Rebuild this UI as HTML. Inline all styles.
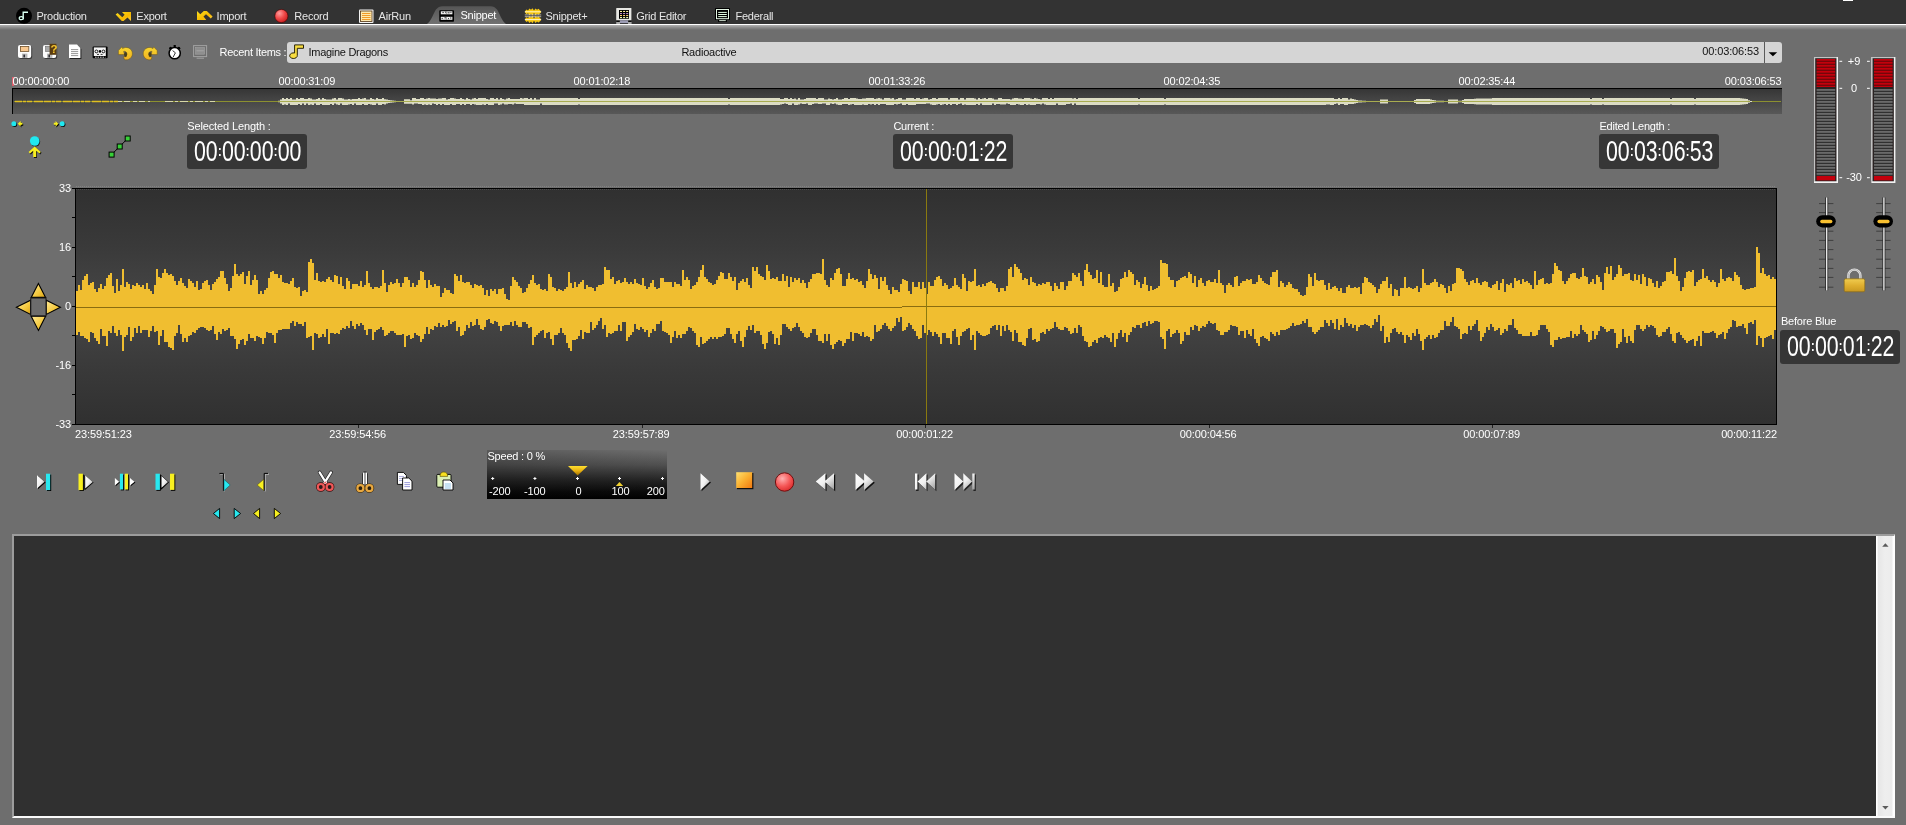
<!DOCTYPE html>
<html lang="en"><head><meta charset="utf-8"><title>Snippet Editor</title>
<style>
html,body{margin:0;padding:0;}
body{width:1906px;height:825px;overflow:hidden;background:#6e6e6e;position:relative;
 font-family:"Liberation Sans",sans-serif;font-size:11px;color:#fff;}
.a{position:absolute;}
.t{position:absolute;white-space:nowrap;line-height:13px;height:13px;}
svg{position:absolute;overflow:visible;}
#topbar{left:0;top:0;width:1906px;height:24px;background:#333;}
#topline{left:0;top:24px;width:1906px;height:1px;background:#fff;}
#topgrad{left:0;top:25px;width:1906px;height:5px;background:linear-gradient(#b2b2b2,#8c8c8c 50%,#6e6e6e);}
.tab{color:#e6e6e6;top:10px;}
.lcd{position:absolute;background:#363636;border-radius:3px;height:35px;width:120px;}
.lcd span{position:absolute;left:7.3px;top:0;white-space:nowrap;font-size:29px;line-height:35.6px;color:#fff;transform-origin:0 0;transform:scaleX(0.735);}
.lcd i{font-style:normal;font-size:15px;position:relative;top:-5px;margin:0 0.35px;font-weight:bold}
.ls{letter-spacing:-0.3px;}
.ls2{letter-spacing:-0.22px;}
.ds{letter-spacing:-0.13px;}
.tab{letter-spacing:-0.24px;}
.ax{left:21px;width:50px;text-align:right;}
.tl{width:100px;text-align:center;}
#txt{position:absolute;left:0;top:0;width:1906px;height:825px;will-change:transform;}
.lcd{will-change:transform;}

</style></head>
<body>
<div class="a" id="topbar"></div>
<div class="a" id="topline"></div>
<div class="a" id="topgrad"></div>
<div class="a" style="left:1843px;top:0;width:10px;height:1px;background:#fff"></div>
<svg width="1906" height="25" style="left:0;top:0" viewBox="0 0 1906 25">
 <defs>
  <linearGradient id="gTab" x1="0" y1="0" x2="0" y2="1"><stop offset="0" stop-color="#555"/><stop offset="1" stop-color="#727272"/></linearGradient>
  <radialGradient id="gRec" cx="0.35" cy="0.3" r="0.8"><stop offset="0" stop-color="#ff9a9a"/><stop offset="0.5" stop-color="#f04848"/><stop offset="1" stop-color="#c01818"/></radialGradient>
  <linearGradient id="gGold" x1="0" y1="0" x2="1" y2="1"><stop offset="0" stop-color="#f8e020"/><stop offset="0.6" stop-color="#f8b800"/><stop offset="1" stop-color="#fcd040"/></linearGradient>
 </defs>
 <!-- active tab -->
 <path d="M427,24 C431,22 433.5,13 436,9.6 Q438.5,6.2 442.5,6.2 L490.5,6.2 Q494.5,6.2 497,9.6 C499.5,13 502,22 506,24 Z" fill="url(#gTab)"/>
 <!-- production -->
 <circle cx="24" cy="15.8" r="8" fill="#000"/>
 <path d="M23.2,19.3 V12.2 H28" fill="none" stroke="#d8fff0" stroke-width="1.4"/>
 <ellipse cx="21.3" cy="18.2" rx="2.1" ry="1.5" fill="none" stroke="#d8fff0" stroke-width="1.2"/>
 <!-- export -->
 <path d="M115.6,14.6 L117.6,13 L122.3,17.3 L124.6,14.8 L122,12 L131,12 L131,21 L127.5,17.6 L123.5,21 L121.8,21 Z" fill="url(#gGold)"/>
 <!-- import -->
 <path d="M197,11 L200.3,14.3 L203.8,11 L206.8,11 L212.6,16.6 L210.8,18.6 L206,14.2 L203.5,16.6 L206.3,20 L197,20 Z" fill="url(#gGold)"/>
 <!-- record -->
 <circle cx="281.4" cy="16" r="6.6" fill="url(#gRec)" stroke="#400" stroke-width="0.6"/>
 <!-- airrun -->
 <rect x="359" y="9.5" width="14.5" height="13.5" rx="1" fill="#f4f4f4"/>
 <rect x="360.5" y="11" width="11.5" height="10.5" fill="#fde9b0" stroke="#503010" stroke-width="0.8"/>
 <path d="M362,13.5h8.5M362,15.5h8.5M362,17.5h8.5M362,19.5h8.5" stroke="#f09018" stroke-width="0.9"/>
 <!-- snippet -->
 <rect x="439.3" y="10.3" width="14.7" height="11.4" rx="0.8" fill="#000"/>
 <rect x="440.8" y="11.3" width="11.6" height="3" fill="#f2f2f2"/>
 <rect x="440.8" y="16.8" width="11.6" height="3" fill="#f2f2f2"/>
 <path d="M442.4,12.6h1.4M445,12.2h1M447.6,12.8h2M450.4,12.4h1M441.6,18.4h1.2M444.4,17.8h1.6M448,18.6h1M450,18h1.4" stroke="#222" stroke-width="0.9"/>
 <path d="M446.3,11.3v3M446.3,16.8v3" stroke="#555" stroke-width="0.6"/>
 <!-- snippet+ -->
 <path d="M525,11.2 L526.5,9.4 L528,10.4 L529.5,8.4 L531,9.8 L532.5,8.2 L534,10.6 L535.5,8.4 L537,9.8 L538.5,8.8 L540,10.2 L541,11.2 L541,12.4 L540,13.4 L538.5,14.8 L537,13.8 L535.5,15.2 L534,13.0 L532.5,15.4 L531,13.8 L529.5,15.2 L528,13.2 L526.5,14.2 L525,12.4Z" fill="#f8c810"/>
 <path d="M525,19.0 L526.5,17.2 L528,18.2 L529.5,16.2 L531,17.6 L532.5,16.0 L534,18.4 L535.5,16.2 L537,17.6 L538.5,16.6 L540,18.0 L541,19.0 L541,20.2 L540,21.2 L538.5,22.6 L537,21.6 L535.5,23.0 L534,20.8 L532.5,23.2 L531,21.6 L529.5,23.0 L528,21.0 L526.5,22.0 L525,20.2Z" fill="#f8c810"/>
 <path d="M524.8,11.8h16.4M524.8,19.6h16.4" stroke="#fffbe0" stroke-width="0.9"/>
 <path d="M524.8,14.9h16.4M524.8,16.7h16.4" stroke="#f0ead0" stroke-width="0.7"/>
 <!-- grid editor -->
 <rect x="616.2" y="8" width="15.2" height="12.3" rx="0.6" fill="#e8e8e4"/>
 <rect x="619" y="10" width="10" height="8.8" fill="#000"/>
 <rect x="620.0" y="10.9" width="2" height="1.1" fill="#fff0a0"/><rect x="623.1" y="10.9" width="2" height="1.1" fill="#fff0a0"/><rect x="626.2" y="10.9" width="2" height="1.1" fill="#fff0a0"/><rect x="620.0" y="13.0" width="2" height="1.1" fill="#b888c8"/><rect x="623.1" y="13.0" width="2" height="1.1" fill="#b888c8"/><rect x="626.2" y="13.0" width="2" height="1.1" fill="#b888c8"/><rect x="620.0" y="15.0" width="2" height="1.1" fill="#ffd070"/><rect x="623.1" y="15.0" width="2" height="1.1" fill="#ffd070"/><rect x="626.2" y="15.0" width="2" height="1.1" fill="#ffd070"/><rect x="620.0" y="17.0" width="2" height="1.1" fill="#f0f8b0"/><rect x="623.1" y="17.0" width="2" height="1.1" fill="#f0f8b0"/><rect x="626.2" y="17.0" width="2" height="1.1" fill="#f0f8b0"/>
 <rect x="620" y="20.3" width="8" height="2.8" fill="#9c9cb4"/>
 <rect x="616.2" y="22.4" width="3.8" height="1.2" fill="#f4f4f4"/><rect x="628" y="22.4" width="3.6" height="1.2" fill="#f4f4f4"/>
 <rect x="616.6" y="20.8" width="2.6" height="1" fill="#000"/><rect x="628.6" y="20.8" width="2.6" height="1" fill="#000"/>
 <!-- federall -->
 <rect x="715" y="8" width="15" height="12" rx="0.6" fill="#000"/>
 <rect x="716.5" y="9.5" width="12" height="9.2" fill="none" stroke="#e4f6e4" stroke-width="1"/>
 <path d="M718.2,12.4h8.6M718.2,14.5h8.6M718.2,16.6h8.6" stroke="#e4ffe4" stroke-width="1"/>
 <rect x="718" y="20" width="9" height="1.9" fill="#000"/>
 <rect x="719.2" y="20.2" width="6.6" height="0.9" fill="#e4f6e4"/>
</svg>
<svg width="220" height="30" style="left:0;top:36px" viewBox="0 36 220 30">
 <defs>
  <linearGradient id="gUndo" x1="0" y1="0" x2="0" y2="1"><stop offset="0" stop-color="#f8d830"/><stop offset="1" stop-color="#f0b020"/></linearGradient>
 </defs>
 <!-- save -->
 <rect x="19" y="46" width="13.2" height="13" rx="2" fill="#3a3a3a"/>
 <rect x="18" y="45" width="13.2" height="13" rx="2" fill="#fdfdfd"/>
 <rect x="20.4" y="46.4" width="8.4" height="5" fill="#f8c890" stroke="#70502a" stroke-width="0.8"/>
 <rect x="22" y="53.6" width="5.4" height="4.4" fill="#b8b8b8"/>
 <rect x="23.4" y="54.6" width="1.6" height="2.8" fill="#303038"/>
 <!-- save as -->
 <rect x="44" y="46" width="13.2" height="13" rx="2" fill="#3a3a3a"/>
 <rect x="43" y="45" width="13.2" height="13" rx="2" fill="#fdfdfd"/>
 <rect x="45.6" y="46.2" width="6" height="5.2" fill="#a8a8a8" stroke="#686868" stroke-width="0.6"/>
 <rect x="47" y="53.6" width="5.4" height="4.4" fill="#b8b8b8"/>
 <rect x="48.4" y="54.6" width="1.6" height="2.8" fill="#303038"/>
 <rect x="49.6" y="43.8" width="6.8" height="11" fill="#5a3c10"/>
 <!-- document -->
 <path d="M70,45.6 H78 L81.4,49 V59 H70 Z" fill="#222"/>
 <path d="M69,44.6 H77 L80.4,48 V58 H69 Z" fill="#fff"/>
 <path d="M71,49.6h7.2M71,51.6h7.2M71,53.6h7.2M71,55.6h7.2" stroke="#8a8a8a" stroke-width="0.9"/>
 <!-- cassette -->
 <rect x="92.6" y="46.4" width="15" height="11.8" rx="1" fill="#000"/>
 <rect x="93.8" y="47.4" width="12" height="8.6" fill="#f4f4f4"/>
 <circle cx="96.4" cy="51.4" r="1.4" fill="#fff" stroke="#000" stroke-width="0.9"/>
 <circle cx="103.4" cy="51.4" r="1.4" fill="#fff" stroke="#000" stroke-width="0.9"/>
 <rect x="98.8" y="50.2" width="2.2" height="2.4" fill="#000"/>
 <path d="M97,54.4h2M100.6,54.4h2" stroke="#000" stroke-width="0.8"/>
 <path d="M95,57.2h10.4" stroke="#fff" stroke-width="0.8" stroke-dasharray="1.6 0.9"/>
 <!-- undo -->
 <path d="M118.4,50.6 L122,46.8 L122.6,48.6 A6.2,6.2 0 1 1 124.4,59.6 L123.6,56.4 A2.6,2.6 0 1 0 123.6,51.4 L124.6,54.6 L118.4,54.6 Z" fill="url(#gUndo)" stroke="#6a5418" stroke-width="0.5"/>
 <ellipse cx="125.6" cy="54.6" rx="1.5" ry="2.6" fill="#3a3008" opacity="0.75"/>
 <!-- redo -->
 <path d="M157.2,50.6 L153.6,46.8 L153,48.6 A6.2,6.2 0 1 0 151.2,59.6 L152,56.4 A2.6,2.6 0 1 1 152,51.4 L151,54.6 L157.2,54.6 Z" fill="url(#gUndo)" stroke="#6a5418" stroke-width="0.5"/>
 <ellipse cx="150" cy="54.6" rx="1.5" ry="2.6" fill="#3a3008" opacity="0.75"/>
 <!-- clock -->
 <circle cx="170.6" cy="48.2" r="1.5" fill="#000"/><circle cx="178.8" cy="48.2" r="1.5" fill="#000"/>
 <rect x="173.6" y="45" width="2.2" height="2.2" fill="#000"/>
 <circle cx="174.7" cy="53.2" r="5.6" fill="#fff" stroke="#000" stroke-width="1.5"/>
 <path d="M172.6,50.6 L175.4,52.8 L173.2,57" fill="none" stroke="#222" stroke-width="0.9"/>
 <!-- monitor disabled -->
 <rect x="193.6" y="45.6" width="13" height="11" fill="none" stroke="#a2a2a2" stroke-width="1"/>
 <rect x="195.6" y="47.6" width="9" height="6.6" fill="#8e8e8e" stroke="#a2a2a2" stroke-width="0.6"/>
 <path d="M196.4,50.8h7.4" stroke="#a8a8a8" stroke-width="0.9"/>
 <path d="M196.6,58.2h7.4" stroke="#a2a2a2" stroke-width="1"/>
</svg>
<div class="a" style="left:287px;top:42px;width:1495px;height:21px;background:#d5d5d5;border-radius:3px;"></div>
<div class="a" style="left:1764px;top:42px;width:1px;height:21px;background:#5a5a5a;"></div>
<svg width="1500" height="25" style="left:287px;top:40px" viewBox="287 40 1500 25">
 <path d="M1768.6,52.3 H1777.2 L1772.9,56.2 Z" fill="#000"/>
 <!-- note -->
 <path d="M294.6,44.9 H303.5 V48.3 H297.3 V55.6 A3.8,2.8 0 1 1 294.6,53 Z" fill="#f8dc40" stroke="#2a2408" stroke-width="1" stroke-linejoin="round"/>
</svg>
<div class="a" style="left:12px;top:77px;width:2px;height:9px;background:#ff5a6a;opacity:.75"></div>
<div class="a" style="left:12px;top:88px;width:1770px;height:26px;background:linear-gradient(#363636,#585858);border-top:1px solid #000;border-left:1px solid #000;box-sizing:border-box"></div>
<svg width="1770" height="26" style="left:12px;top:88px" viewBox="12 88 1770 26">
 <path d="M14,101.5 H1781" stroke="#8c9030" stroke-width="1"/>
 <path d="M15,101.5 H118" stroke="#e0c020" stroke-width="1.4" stroke-dasharray="7 1 3 1 5 2 9 1"/>
 <path d="M118,101.5 H150" stroke="#d8d8a8" stroke-width="1.2" stroke-dasharray="4 2 6 3"/>
 <path d="M165,101.5 H215" stroke="#d8d8a8" stroke-width="1.2" stroke-dasharray="8 2 3 2"/>
 <path d="M276,101.5 278,101.5 278,100.7 280,100.7 280,99.6 282,99.6 282,98.1 284,98.1 284,98.9 286,98.9 286,98.1 288,98.1 288,99.1 290,99.1 290,98.1 292,98.1 292,99.5 294,99.5 294,99.5 296,99.5 296,98.1 298,98.1 298,98.9 300,98.9 300,98.1 302,98.1 302,98.1 304,98.1 304,98.9 306,98.9 306,99.1 308,99.1 308,98.1 310,98.1 310,98.6 312,98.6 312,99.5 314,99.5 314,99.5 316,99.5 316,98.9 318,98.9 318,98.1 320,98.1 320,99.5 322,99.5 322,98.1 324,98.1 324,98.9 326,98.9 326,99.5 328,99.5 328,99.5 330,99.5 330,99.5 332,99.5 332,98.6 334,98.6 334,98.1 336,98.1 336,99.5 338,99.5 338,98.1 340,98.1 340,98.1 342,98.1 342,98.6 344,98.6 344,99.5 346,99.5 346,99.5 348,99.5 348,98.9 350,98.9 350,99.5 352,99.5 352,99.1 354,99.1 354,98.9 356,98.9 356,98.9 358,98.9 358,98.1 360,98.1 360,99.1 362,99.1 362,98.6 364,98.6 364,98.1 366,98.1 366,99.5 368,99.5 368,99.5 370,99.5 370,98.1 372,98.1 372,98.9 374,98.9 374,99.5 376,99.5 376,98.1 378,98.1 378,98.9 380,98.9 380,99.1 382,99.1 382,98.1 384,98.1 384,99.3 386,99.3 386,99.5 388,99.5 388,100.0 390,100.0 390,100.3 392,100.3 392,100.6 394,100.6 394,100.8 396,100.8 396,101.0 398,101.0 398,101.0 400,101.0 400,101.0 402,101.0 402,101.0 404,101.0 404,99.3 406,99.3 406,99.3 408,99.3 408,99.3 410,99.3 410,100.3 412,100.3 412,98.1 414,98.1 414,98.1 416,98.1 416,98.9 418,98.9 418,99.1 420,99.1 420,98.1 422,98.1 422,98.1 424,98.1 424,98.9 426,98.9 426,98.6 428,98.6 428,98.1 430,98.1 430,98.6 432,98.6 432,98.6 434,98.6 434,98.6 436,98.6 436,98.9 438,98.9 438,98.6 440,98.6 440,98.6 442,98.6 442,98.1 444,98.1 444,98.1 446,98.1 446,99.5 448,99.5 448,98.9 450,98.9 450,98.1 452,98.1 452,98.1 454,98.1 454,98.6 456,98.6 456,98.9 458,98.9 458,99.1 460,99.1 460,98.1 462,98.1 462,98.9 464,98.9 464,99.5 466,99.5 466,98.1 468,98.1 468,98.9 470,98.9 470,99.5 472,99.5 472,98.6 474,98.6 474,98.1 476,98.1 476,98.9 478,98.9 478,98.1 480,98.1 480,98.1 482,98.1 482,98.1 484,98.1 484,98.1 486,98.1 486,98.9 488,98.9 488,99.5 490,99.5 490,98.1 492,98.1 492,98.1 494,98.1 494,98.9 496,98.9 496,98.1 498,98.1 498,99.5 500,99.5 500,98.1 502,98.1 502,99.1 504,99.1 504,99.5 506,99.5 506,98.6 508,98.6 508,98.1 510,98.1 510,99.1 512,99.1 512,99.1 514,99.1 514,99.1 516,99.1 516,98.9 518,98.9 518,98.9 520,98.9 520,98.1 522,98.1 522,98.6 524,98.6 524,98.1 526,98.1 526,98.1 528,98.1 528,98.9 530,98.9 530,98.1 532,98.1 532,99.5 534,99.5 534,98.1 536,98.1 536,99.5 538,99.5 538,99.5 540,99.5 540,98.1 542,98.1 542,98.1 544,98.1 544,98.1 546,98.1 546,98.1 548,98.1 548,98.1 550,98.1 550,98.1 552,98.1 552,98.1 554,98.1 554,98.1 556,98.1 556,98.1 558,98.1 558,98.1 560,98.1 560,98.1 562,98.1 562,98.1 564,98.1 564,98.1 566,98.1 566,98.1 568,98.1 568,98.1 570,98.1 570,98.1 572,98.1 572,98.1 574,98.1 574,98.1 576,98.1 576,98.1 578,98.1 578,98.9 580,98.9 580,98.1 582,98.1 582,98.1 584,98.1 584,98.1 586,98.1 586,98.1 588,98.1 588,98.1 590,98.1 590,98.1 592,98.1 592,98.1 594,98.1 594,98.1 596,98.1 596,98.1 598,98.1 598,98.1 600,98.1 600,98.1 602,98.1 602,98.1 604,98.1 604,98.1 606,98.1 606,98.1 608,98.1 608,98.1 610,98.1 610,98.1 612,98.1 612,98.1 614,98.1 614,98.1 616,98.1 616,98.1 618,98.1 618,98.1 620,98.1 620,98.1 622,98.1 622,98.1 624,98.1 624,98.1 626,98.1 626,98.1 628,98.1 628,98.1 630,98.1 630,98.1 632,98.1 632,98.1 634,98.1 634,98.1 636,98.1 636,98.1 638,98.1 638,98.1 640,98.1 640,98.1 642,98.1 642,98.1 644,98.1 644,98.1 646,98.1 646,98.1 648,98.1 648,98.1 650,98.1 650,98.1 652,98.1 652,98.1 654,98.1 654,98.1 656,98.1 656,98.1 658,98.1 658,98.1 660,98.1 660,98.1 662,98.1 662,98.1 664,98.1 664,98.1 666,98.1 666,98.1 668,98.1 668,98.1 670,98.1 670,98.1 672,98.1 672,98.1 674,98.1 674,98.1 676,98.1 676,98.1 678,98.1 678,98.1 680,98.1 680,98.1 682,98.1 682,98.1 684,98.1 684,98.1 686,98.1 686,98.1 688,98.1 688,98.1 690,98.1 690,98.1 692,98.1 692,98.1 694,98.1 694,98.1 696,98.1 696,98.1 698,98.1 698,98.1 700,98.1 700,98.1 702,98.1 702,98.1 704,98.1 704,98.1 706,98.1 706,98.1 708,98.1 708,98.1 710,98.1 710,98.1 712,98.1 712,98.1 714,98.1 714,98.1 716,98.1 716,98.1 718,98.1 718,98.1 720,98.1 720,98.1 722,98.1 722,98.1 724,98.1 724,98.1 726,98.1 726,98.1 728,98.1 728,98.9 730,98.9 730,98.1 732,98.1 732,98.1 734,98.1 734,98.1 736,98.1 736,98.1 738,98.1 738,98.1 740,98.1 740,98.1 742,98.1 742,98.1 744,98.1 744,98.1 746,98.1 746,98.1 748,98.1 748,98.1 750,98.1 750,98.1 752,98.1 752,98.1 754,98.1 754,98.1 756,98.1 756,98.1 758,98.1 758,98.1 760,98.1 760,98.1 762,98.1 762,98.1 764,98.1 764,98.1 766,98.1 766,98.1 768,98.1 768,98.1 770,98.1 770,98.1 772,98.1 772,98.1 774,98.1 774,98.1 776,98.1 776,98.1 778,98.1 778,98.1 780,98.1 780,98.9 782,98.9 782,98.9 784,98.9 784,98.1 786,98.1 786,98.1 788,98.1 788,99.1 790,99.1 790,98.1 792,98.1 792,98.9 794,98.9 794,98.6 796,98.6 796,99.5 798,99.5 798,98.1 800,98.1 800,99.5 802,99.5 802,99.5 804,99.5 804,99.1 806,99.1 806,98.1 808,98.1 808,98.1 810,98.1 810,98.1 812,98.1 812,98.1 814,98.1 814,98.1 816,98.1 816,98.9 818,98.9 818,98.1 820,98.1 820,98.1 822,98.1 822,98.1 824,98.1 824,99.5 826,99.5 826,99.5 828,99.5 828,98.6 830,98.6 830,98.9 832,98.9 832,99.5 834,99.5 834,98.9 836,98.9 836,98.1 838,98.1 838,99.5 840,99.5 840,99.5 842,99.5 842,99.1 844,99.1 844,98.1 846,98.1 846,98.1 848,98.1 848,98.9 850,98.9 850,98.1 852,98.1 852,98.1 854,98.1 854,98.1 856,98.1 856,98.6 858,98.6 858,99.1 860,99.1 860,99.1 862,99.1 862,98.6 864,98.6 864,98.6 866,98.6 866,98.1 868,98.1 868,98.1 870,98.1 870,98.1 872,98.1 872,98.1 874,98.1 874,98.9 876,98.9 876,98.6 878,98.6 878,98.1 880,98.1 880,98.6 882,98.6 882,99.5 884,99.5 884,98.1 886,98.1 886,98.1 888,98.1 888,98.1 890,98.1 890,98.6 892,98.6 892,98.1 894,98.1 894,99.5 896,99.5 896,98.9 898,98.9 898,98.1 900,98.1 900,98.1 902,98.1 902,99.5 904,99.5 904,99.5 906,99.5 906,98.1 908,98.1 908,98.1 910,98.1 910,98.1 912,98.1 912,98.1 914,98.1 914,99.1 916,99.1 916,98.1 918,98.1 918,98.1 920,98.1 920,98.9 922,98.9 922,98.6 924,98.6 924,98.1 926,98.1 926,98.1 928,98.1 928,99.5 930,99.5 930,98.9 932,98.9 932,98.1 934,98.1 934,98.1 936,98.1 936,99.1 938,99.1 938,98.1 940,98.1 940,98.1 942,98.1 942,98.1 944,98.1 944,98.1 946,98.1 946,98.1 948,98.1 948,99.5 950,99.5 950,98.1 952,98.1 952,98.1 954,98.1 954,98.1 956,98.1 956,98.1 958,98.1 958,99.5 960,99.5 960,98.1 962,98.1 962,98.1 964,98.1 964,99.5 966,99.5 966,98.1 968,98.1 968,98.1 970,98.1 970,98.1 972,98.1 972,98.1 974,98.1 974,98.6 976,98.6 976,99.5 978,99.5 978,98.1 980,98.1 980,98.9 982,98.9 982,98.6 984,98.6 984,98.1 986,98.1 986,99.1 988,99.1 988,98.1 990,98.1 990,98.1 992,98.1 992,98.6 994,98.6 994,99.5 996,99.5 996,99.5 998,99.5 998,98.1 1000,98.1 1000,98.1 1002,98.1 1002,99.1 1004,99.1 1004,98.9 1006,98.9 1006,98.9 1008,98.9 1008,99.1 1010,99.1 1010,99.5 1012,99.5 1012,98.6 1014,98.6 1014,98.1 1016,98.1 1016,98.1 1018,98.1 1018,98.6 1020,98.6 1020,98.6 1022,98.6 1022,98.9 1024,98.9 1024,98.1 1026,98.1 1026,98.1 1028,98.1 1028,98.1 1030,98.1 1030,98.6 1032,98.6 1032,98.9 1034,98.9 1034,98.1 1036,98.1 1036,98.6 1038,98.6 1038,98.9 1040,98.9 1040,99.5 1042,99.5 1042,98.1 1044,98.1 1044,98.1 1046,98.1 1046,98.1 1048,98.1 1048,98.9 1050,98.9 1050,98.1 1052,98.1 1052,98.9 1054,98.9 1054,98.1 1056,98.1 1056,98.1 1058,98.1 1058,98.1 1060,98.1 1060,98.1 1062,98.1 1062,98.1 1064,98.1 1064,98.1 1066,98.1 1066,98.1 1068,98.1 1068,98.1 1070,98.1 1070,98.1 1072,98.1 1072,98.6 1074,98.6 1074,98.1 1076,98.1 1076,99.1 1078,99.1 1078,98.1 1080,98.1 1080,98.1 1082,98.1 1082,98.1 1084,98.1 1084,98.1 1086,98.1 1086,98.1 1088,98.1 1088,98.1 1090,98.1 1090,98.1 1092,98.1 1092,98.1 1094,98.1 1094,98.1 1096,98.1 1096,98.1 1098,98.1 1098,98.1 1100,98.1 1100,98.1 1102,98.1 1102,98.1 1104,98.1 1104,98.1 1106,98.1 1106,98.1 1108,98.1 1108,98.1 1110,98.1 1110,98.1 1112,98.1 1112,98.1 1114,98.1 1114,98.1 1116,98.1 1116,98.1 1118,98.1 1118,98.1 1120,98.1 1120,98.1 1122,98.1 1122,98.1 1124,98.1 1124,98.1 1126,98.1 1126,98.1 1128,98.1 1128,98.1 1130,98.1 1130,98.1 1132,98.1 1132,98.1 1134,98.1 1134,98.1 1136,98.1 1136,98.1 1138,98.1 1138,98.9 1140,98.9 1140,98.1 1142,98.1 1142,98.1 1144,98.1 1144,98.1 1146,98.1 1146,98.1 1148,98.1 1148,98.1 1150,98.1 1150,98.1 1152,98.1 1152,98.1 1154,98.1 1154,98.1 1156,98.1 1156,98.1 1158,98.1 1158,98.1 1160,98.1 1160,98.1 1162,98.1 1162,98.1 1164,98.1 1164,98.9 1166,98.9 1166,98.1 1168,98.1 1168,98.1 1170,98.1 1170,98.1 1172,98.1 1172,98.1 1174,98.1 1174,98.1 1176,98.1 1176,98.1 1178,98.1 1178,98.1 1180,98.1 1180,98.1 1182,98.1 1182,98.1 1184,98.1 1184,98.1 1186,98.1 1186,98.1 1188,98.1 1188,98.1 1190,98.1 1190,98.1 1192,98.1 1192,98.1 1194,98.1 1194,98.1 1196,98.1 1196,98.1 1198,98.1 1198,98.1 1200,98.1 1200,98.1 1202,98.1 1202,98.1 1204,98.1 1204,98.1 1206,98.1 1206,98.1 1208,98.1 1208,98.1 1210,98.1 1210,98.1 1212,98.1 1212,98.1 1214,98.1 1214,98.1 1216,98.1 1216,98.1 1218,98.1 1218,98.1 1220,98.1 1220,98.1 1222,98.1 1222,98.1 1224,98.1 1224,98.1 1226,98.1 1226,98.1 1228,98.1 1228,98.1 1230,98.1 1230,98.1 1232,98.1 1232,98.1 1234,98.1 1234,98.1 1236,98.1 1236,98.1 1238,98.1 1238,98.1 1240,98.1 1240,98.1 1242,98.1 1242,98.1 1244,98.1 1244,98.1 1246,98.1 1246,98.1 1248,98.1 1248,98.1 1250,98.1 1250,98.1 1252,98.1 1252,98.1 1254,98.1 1254,98.1 1256,98.1 1256,98.1 1258,98.1 1258,98.1 1260,98.1 1260,98.1 1262,98.1 1262,98.1 1264,98.1 1264,98.1 1266,98.1 1266,98.1 1268,98.1 1268,98.1 1270,98.1 1270,98.1 1272,98.1 1272,98.1 1274,98.1 1274,98.1 1276,98.1 1276,98.1 1278,98.1 1278,98.1 1280,98.1 1280,98.1 1282,98.1 1282,98.1 1284,98.1 1284,98.1 1286,98.1 1286,98.1 1288,98.1 1288,98.1 1290,98.1 1290,98.1 1292,98.1 1292,98.1 1294,98.1 1294,98.1 1296,98.1 1296,98.1 1298,98.1 1298,98.1 1300,98.1 1300,98.1 1302,98.1 1302,98.1 1304,98.1 1304,98.1 1306,98.1 1306,98.1 1308,98.1 1308,98.1 1310,98.1 1310,98.1 1312,98.1 1312,98.1 1314,98.1 1314,98.1 1316,98.1 1316,98.1 1318,98.1 1318,98.1 1320,98.1 1320,98.1 1322,98.1 1322,98.1 1324,98.1 1324,98.1 1326,98.1 1326,98.1 1328,98.1 1328,98.1 1330,98.1 1330,98.1 1332,98.1 1332,98.1 1334,98.1 1334,98.9 1336,98.9 1336,99.1 1338,99.1 1338,98.1 1340,98.1 1340,98.9 1342,98.9 1342,98.1 1344,98.1 1344,98.1 1346,98.1 1346,98.1 1348,98.1 1348,99.4 1350,99.4 1350,98.6 1352,98.6 1352,98.9 1354,98.9 1354,99.4 1356,99.4 1356,100.0 1358,100.0 1358,100.5 1360,100.5 1360,100.6 1362,100.6 1362,100.7 1364,100.7 1364,100.8 1366,100.8 1366,100.9 1368,100.9 1368,100.9 1370,100.9 1370,100.9 1372,100.9 1372,100.9 1374,100.9 1374,100.9 1376,100.9 1376,100.9 1378,100.9 1378,100.9 1380,100.9 1380,99.5 1382,99.5 1382,99.5 1384,99.5 1384,99.5 1386,99.5 1386,99.5 1388,99.5 1388,100.9 1390,100.9 1390,100.9 1392,100.9 1392,100.9 1394,100.9 1394,100.9 1396,100.9 1396,100.9 1398,100.9 1398,100.9 1400,100.9 1400,100.9 1402,100.9 1402,100.9 1404,100.9 1404,100.9 1406,100.9 1406,100.9 1408,100.9 1408,100.9 1410,100.9 1410,100.9 1412,100.9 1412,100.9 1414,100.9 1414,100.0 1416,100.0 1416,99.1 1418,99.1 1418,99.1 1420,99.1 1420,99.1 1422,99.1 1422,99.1 1424,99.1 1424,99.1 1426,99.1 1426,99.1 1428,99.1 1428,99.1 1430,99.1 1430,99.5 1432,99.5 1432,99.9 1434,99.9 1434,100.3 1436,100.3 1436,100.7 1438,100.7 1438,100.7 1440,100.7 1440,100.8 1442,100.8 1442,100.8 1444,100.8 1444,100.9 1446,100.9 1446,100.9 1448,100.9 1448,99.5 1450,99.5 1450,99.5 1452,99.5 1452,99.5 1454,99.5 1454,99.5 1456,99.5 1456,99.5 1458,99.5 1458,100.8 1460,100.8 1460,100.8 1462,100.8 1462,100.0 1464,100.0 1464,99.1 1466,99.1 1466,99.0 1468,99.0 1468,99.0 1470,99.0 1470,98.9 1472,98.9 1472,98.9 1474,98.9 1474,98.8 1476,98.8 1476,98.6 1478,98.6 1478,98.5 1480,98.5 1480,98.5 1482,98.5 1482,98.5 1484,98.5 1484,98.5 1486,98.5 1486,98.5 1488,98.5 1488,98.5 1490,98.5 1490,98.5 1492,98.5 1492,98.1 1494,98.1 1494,98.1 1496,98.1 1496,98.1 1498,98.1 1498,98.1 1500,98.1 1500,98.1 1502,98.1 1502,98.1 1504,98.1 1504,98.1 1506,98.1 1506,98.1 1508,98.1 1508,98.1 1510,98.1 1510,98.1 1512,98.1 1512,98.1 1514,98.1 1514,98.1 1516,98.1 1516,98.1 1518,98.1 1518,98.1 1520,98.1 1520,98.1 1522,98.1 1522,98.1 1524,98.1 1524,98.1 1526,98.1 1526,98.1 1528,98.1 1528,98.1 1530,98.1 1530,98.1 1532,98.1 1532,98.1 1534,98.1 1534,98.1 1536,98.1 1536,98.1 1538,98.1 1538,98.1 1540,98.1 1540,98.1 1542,98.1 1542,98.1 1544,98.1 1544,98.1 1546,98.1 1546,98.1 1548,98.1 1548,98.1 1550,98.1 1550,98.1 1552,98.1 1552,98.1 1554,98.1 1554,98.1 1556,98.1 1556,98.1 1558,98.1 1558,98.1 1560,98.1 1560,98.1 1562,98.1 1562,98.1 1564,98.1 1564,98.1 1566,98.1 1566,98.1 1568,98.1 1568,98.1 1570,98.1 1570,98.1 1572,98.1 1572,98.1 1574,98.1 1574,98.1 1576,98.1 1576,98.1 1578,98.1 1578,98.1 1580,98.1 1580,98.1 1582,98.1 1582,98.1 1584,98.1 1584,98.1 1586,98.1 1586,98.1 1588,98.1 1588,98.1 1590,98.1 1590,98.9 1592,98.9 1592,98.1 1594,98.1 1594,98.1 1596,98.1 1596,98.1 1598,98.1 1598,98.1 1600,98.1 1600,98.1 1602,98.1 1602,98.9 1604,98.9 1604,98.1 1606,98.1 1606,98.1 1608,98.1 1608,98.1 1610,98.1 1610,98.1 1612,98.1 1612,98.1 1614,98.1 1614,98.1 1616,98.1 1616,98.1 1618,98.1 1618,98.1 1620,98.1 1620,98.1 1622,98.1 1622,98.1 1624,98.1 1624,98.1 1626,98.1 1626,98.1 1628,98.1 1628,98.1 1630,98.1 1630,98.1 1632,98.1 1632,98.1 1634,98.1 1634,98.1 1636,98.1 1636,98.1 1638,98.1 1638,98.1 1640,98.1 1640,98.1 1642,98.1 1642,98.1 1644,98.1 1644,98.1 1646,98.1 1646,98.1 1648,98.1 1648,98.1 1650,98.1 1650,98.1 1652,98.1 1652,98.1 1654,98.1 1654,98.1 1656,98.1 1656,98.1 1658,98.1 1658,98.1 1660,98.1 1660,98.1 1662,98.1 1662,98.1 1664,98.1 1664,98.1 1666,98.1 1666,98.1 1668,98.1 1668,98.1 1670,98.1 1670,98.9 1672,98.9 1672,98.1 1674,98.1 1674,98.1 1676,98.1 1676,98.1 1678,98.1 1678,98.1 1680,98.1 1680,98.1 1682,98.1 1682,98.1 1684,98.1 1684,98.1 1686,98.1 1686,98.1 1688,98.1 1688,98.1 1690,98.1 1690,98.1 1692,98.1 1692,98.1 1694,98.1 1694,98.9 1696,98.9 1696,98.1 1698,98.1 1698,98.1 1700,98.1 1700,98.1 1702,98.1 1702,98.1 1704,98.1 1704,98.1 1706,98.1 1706,98.1 1708,98.1 1708,98.1 1710,98.1 1710,98.1 1712,98.1 1712,98.1 1714,98.1 1714,98.1 1716,98.1 1716,98.1 1718,98.1 1718,98.1 1720,98.1 1720,98.1 1722,98.1 1722,98.1 1724,98.1 1724,98.1 1726,98.1 1726,98.1 1728,98.1 1728,98.1 1730,98.1 1730,98.1 1732,98.1 1732,98.1 1734,98.1 1734,98.1 1736,98.1 1736,98.1 1738,98.1 1738,98.1 1740,98.1 1740,98.3 1742,98.3 1742,98.5 1744,98.5 1744,98.8 1746,98.8 1746,99.1 1748,99.1 1748,100.2 1750,100.2 1750,101.0 1752,101.0 L1752,102.0 1750,102.0 1750,102.8 1748,102.8 1748,103.9 1746,103.9 1746,104.2 1744,104.2 1744,104.5 1742,104.5 1742,104.7 1740,104.7 1740,104.9 1738,104.9 1738,104.9 1736,104.9 1736,104.9 1734,104.9 1734,104.9 1732,104.9 1732,104.9 1730,104.9 1730,104.9 1728,104.9 1728,104.9 1726,104.9 1726,104.9 1724,104.9 1724,104.9 1722,104.9 1722,104.9 1720,104.9 1720,104.9 1718,104.9 1718,104.9 1716,104.9 1716,104.9 1714,104.9 1714,104.9 1712,104.9 1712,104.9 1710,104.9 1710,104.9 1708,104.9 1708,104.9 1706,104.9 1706,104.9 1704,104.9 1704,104.9 1702,104.9 1702,104.9 1700,104.9 1700,104.9 1698,104.9 1698,104.9 1696,104.9 1696,104.5 1694,104.5 1694,104.9 1692,104.9 1692,104.9 1690,104.9 1690,104.9 1688,104.9 1688,104.9 1686,104.9 1686,104.9 1684,104.9 1684,104.9 1682,104.9 1682,104.9 1680,104.9 1680,104.9 1678,104.9 1678,104.9 1676,104.9 1676,104.9 1674,104.9 1674,104.9 1672,104.9 1672,104.5 1670,104.5 1670,104.9 1668,104.9 1668,104.9 1666,104.9 1666,104.9 1664,104.9 1664,104.9 1662,104.9 1662,104.9 1660,104.9 1660,104.9 1658,104.9 1658,104.9 1656,104.9 1656,104.9 1654,104.9 1654,104.9 1652,104.9 1652,104.9 1650,104.9 1650,104.9 1648,104.9 1648,104.9 1646,104.9 1646,104.9 1644,104.9 1644,104.9 1642,104.9 1642,104.9 1640,104.9 1640,104.9 1638,104.9 1638,104.9 1636,104.9 1636,104.9 1634,104.9 1634,104.9 1632,104.9 1632,104.9 1630,104.9 1630,104.9 1628,104.9 1628,104.9 1626,104.9 1626,104.9 1624,104.9 1624,104.9 1622,104.9 1622,104.9 1620,104.9 1620,104.9 1618,104.9 1618,104.9 1616,104.9 1616,104.9 1614,104.9 1614,104.9 1612,104.9 1612,104.9 1610,104.9 1610,104.9 1608,104.9 1608,104.9 1606,104.9 1606,104.9 1604,104.9 1604,104.5 1602,104.5 1602,104.9 1600,104.9 1600,104.9 1598,104.9 1598,104.9 1596,104.9 1596,104.9 1594,104.9 1594,104.9 1592,104.9 1592,104.5 1590,104.5 1590,104.9 1588,104.9 1588,104.9 1586,104.9 1586,104.9 1584,104.9 1584,104.9 1582,104.9 1582,104.9 1580,104.9 1580,104.9 1578,104.9 1578,104.9 1576,104.9 1576,104.9 1574,104.9 1574,104.9 1572,104.9 1572,104.9 1570,104.9 1570,104.9 1568,104.9 1568,104.9 1566,104.9 1566,104.9 1564,104.9 1564,104.9 1562,104.9 1562,104.9 1560,104.9 1560,104.9 1558,104.9 1558,104.9 1556,104.9 1556,104.9 1554,104.9 1554,104.9 1552,104.9 1552,104.9 1550,104.9 1550,104.9 1548,104.9 1548,104.9 1546,104.9 1546,104.9 1544,104.9 1544,104.9 1542,104.9 1542,104.9 1540,104.9 1540,104.9 1538,104.9 1538,104.9 1536,104.9 1536,104.9 1534,104.9 1534,104.9 1532,104.9 1532,104.9 1530,104.9 1530,104.9 1528,104.9 1528,104.9 1526,104.9 1526,104.9 1524,104.9 1524,104.9 1522,104.9 1522,104.9 1520,104.9 1520,104.9 1518,104.9 1518,104.9 1516,104.9 1516,104.9 1514,104.9 1514,104.9 1512,104.9 1512,104.9 1510,104.9 1510,104.9 1508,104.9 1508,104.9 1506,104.9 1506,104.9 1504,104.9 1504,104.9 1502,104.9 1502,104.9 1500,104.9 1500,104.9 1498,104.9 1498,104.9 1496,104.9 1496,104.9 1494,104.9 1494,104.9 1492,104.9 1492,104.5 1490,104.5 1490,104.5 1488,104.5 1488,104.5 1486,104.5 1486,104.5 1484,104.5 1484,104.5 1482,104.5 1482,104.5 1480,104.5 1480,104.5 1478,104.5 1478,104.4 1476,104.4 1476,104.2 1474,104.2 1474,104.1 1472,104.1 1472,104.1 1470,104.1 1470,104.0 1468,104.0 1468,104.0 1466,104.0 1466,103.9 1464,103.9 1464,103.0 1462,103.0 1462,102.2 1460,102.2 1460,102.2 1458,102.2 1458,103.5 1456,103.5 1456,103.5 1454,103.5 1454,103.5 1452,103.5 1452,103.5 1450,103.5 1450,103.5 1448,103.5 1448,102.1 1446,102.1 1446,102.1 1444,102.1 1444,102.2 1442,102.2 1442,102.2 1440,102.2 1440,102.3 1438,102.3 1438,102.3 1436,102.3 1436,102.7 1434,102.7 1434,103.1 1432,103.1 1432,103.5 1430,103.5 1430,103.9 1428,103.9 1428,103.9 1426,103.9 1426,103.9 1424,103.9 1424,103.9 1422,103.9 1422,103.9 1420,103.9 1420,103.9 1418,103.9 1418,103.9 1416,103.9 1416,103.0 1414,103.0 1414,102.1 1412,102.1 1412,102.1 1410,102.1 1410,102.1 1408,102.1 1408,102.1 1406,102.1 1406,102.1 1404,102.1 1404,102.1 1402,102.1 1402,102.1 1400,102.1 1400,102.1 1398,102.1 1398,102.1 1396,102.1 1396,102.1 1394,102.1 1394,102.1 1392,102.1 1392,102.1 1390,102.1 1390,102.1 1388,102.1 1388,103.5 1386,103.5 1386,103.5 1384,103.5 1384,103.5 1382,103.5 1382,103.5 1380,103.5 1380,102.1 1378,102.1 1378,102.1 1376,102.1 1376,102.1 1374,102.1 1374,102.1 1372,102.1 1372,102.1 1370,102.1 1370,102.1 1368,102.1 1368,102.1 1366,102.1 1366,102.2 1364,102.2 1364,102.3 1362,102.3 1362,102.4 1360,102.4 1360,102.5 1358,102.5 1358,103.0 1356,103.0 1356,103.6 1354,103.6 1354,104.1 1352,104.1 1352,103.9 1350,103.9 1350,104.1 1348,104.1 1348,104.9 1346,104.9 1346,104.9 1344,104.9 1344,103.9 1342,103.9 1342,103.9 1340,103.9 1340,104.9 1338,104.9 1338,103.5 1336,103.5 1336,104.1 1334,104.1 1334,104.9 1332,104.9 1332,104.9 1330,104.9 1330,104.4 1328,104.4 1328,104.4 1326,104.4 1326,104.9 1324,104.9 1324,104.9 1322,104.9 1322,104.9 1320,104.9 1320,104.9 1318,104.9 1318,104.9 1316,104.9 1316,104.9 1314,104.9 1314,104.9 1312,104.9 1312,104.9 1310,104.9 1310,104.9 1308,104.9 1308,104.9 1306,104.9 1306,104.9 1304,104.9 1304,104.9 1302,104.9 1302,104.9 1300,104.9 1300,104.9 1298,104.9 1298,104.9 1296,104.9 1296,104.9 1294,104.9 1294,104.9 1292,104.9 1292,104.9 1290,104.9 1290,104.9 1288,104.9 1288,104.9 1286,104.9 1286,104.9 1284,104.9 1284,104.9 1282,104.9 1282,104.9 1280,104.9 1280,104.9 1278,104.9 1278,104.9 1276,104.9 1276,104.9 1274,104.9 1274,104.9 1272,104.9 1272,104.9 1270,104.9 1270,104.9 1268,104.9 1268,104.9 1266,104.9 1266,104.9 1264,104.9 1264,104.9 1262,104.9 1262,104.9 1260,104.9 1260,104.9 1258,104.9 1258,104.9 1256,104.9 1256,104.9 1254,104.9 1254,104.9 1252,104.9 1252,104.9 1250,104.9 1250,104.9 1248,104.9 1248,104.9 1246,104.9 1246,104.9 1244,104.9 1244,104.9 1242,104.9 1242,104.9 1240,104.9 1240,104.9 1238,104.9 1238,104.9 1236,104.9 1236,104.9 1234,104.9 1234,104.9 1232,104.9 1232,104.9 1230,104.9 1230,104.9 1228,104.9 1228,104.9 1226,104.9 1226,104.9 1224,104.9 1224,104.9 1222,104.9 1222,104.9 1220,104.9 1220,104.9 1218,104.9 1218,104.9 1216,104.9 1216,104.9 1214,104.9 1214,104.9 1212,104.9 1212,104.9 1210,104.9 1210,104.9 1208,104.9 1208,104.9 1206,104.9 1206,104.9 1204,104.9 1204,104.9 1202,104.9 1202,104.9 1200,104.9 1200,104.9 1198,104.9 1198,104.9 1196,104.9 1196,104.9 1194,104.9 1194,104.9 1192,104.9 1192,104.9 1190,104.9 1190,104.9 1188,104.9 1188,104.9 1186,104.9 1186,104.9 1184,104.9 1184,104.9 1182,104.9 1182,104.9 1180,104.9 1180,104.9 1178,104.9 1178,104.9 1176,104.9 1176,104.9 1174,104.9 1174,104.9 1172,104.9 1172,104.9 1170,104.9 1170,104.9 1168,104.9 1168,104.9 1166,104.9 1166,104.5 1164,104.5 1164,104.9 1162,104.9 1162,104.9 1160,104.9 1160,104.9 1158,104.9 1158,104.9 1156,104.9 1156,104.9 1154,104.9 1154,104.9 1152,104.9 1152,104.9 1150,104.9 1150,104.9 1148,104.9 1148,104.9 1146,104.9 1146,104.9 1144,104.9 1144,104.9 1142,104.9 1142,104.9 1140,104.9 1140,104.5 1138,104.5 1138,104.9 1136,104.9 1136,104.9 1134,104.9 1134,104.9 1132,104.9 1132,104.9 1130,104.9 1130,104.9 1128,104.9 1128,104.9 1126,104.9 1126,104.9 1124,104.9 1124,104.9 1122,104.9 1122,104.9 1120,104.9 1120,104.9 1118,104.9 1118,104.9 1116,104.9 1116,104.9 1114,104.9 1114,104.9 1112,104.9 1112,104.9 1110,104.9 1110,104.9 1108,104.9 1108,104.9 1106,104.9 1106,104.9 1104,104.9 1104,104.9 1102,104.9 1102,104.9 1100,104.9 1100,104.9 1098,104.9 1098,104.9 1096,104.9 1096,104.9 1094,104.9 1094,104.9 1092,104.9 1092,104.9 1090,104.9 1090,104.9 1088,104.9 1088,104.9 1086,104.9 1086,104.9 1084,104.9 1084,104.9 1082,104.9 1082,104.9 1080,104.9 1080,104.9 1078,104.9 1078,104.9 1076,104.9 1076,103.5 1074,103.5 1074,104.9 1072,104.9 1072,103.5 1070,103.5 1070,104.1 1068,104.1 1068,104.1 1066,104.1 1066,104.9 1064,104.9 1064,104.9 1062,104.9 1062,104.9 1060,104.9 1060,104.9 1058,104.9 1058,103.5 1056,103.5 1056,104.9 1054,104.9 1054,104.9 1052,104.9 1052,104.9 1050,104.9 1050,104.9 1048,104.9 1048,104.9 1046,104.9 1046,104.4 1044,104.4 1044,103.5 1042,103.5 1042,104.4 1040,104.4 1040,103.9 1038,103.9 1038,103.9 1036,103.9 1036,104.9 1034,104.9 1034,104.9 1032,104.9 1032,104.9 1030,104.9 1030,104.4 1028,104.4 1028,104.9 1026,104.9 1026,103.9 1024,103.9 1024,104.9 1022,104.9 1022,104.9 1020,104.9 1020,104.4 1018,104.4 1018,103.9 1016,103.9 1016,104.9 1014,104.9 1014,104.9 1012,104.9 1012,104.9 1010,104.9 1010,104.1 1008,104.1 1008,103.5 1006,103.5 1006,104.4 1004,104.4 1004,104.4 1002,104.4 1002,104.4 1000,104.4 1000,104.1 998,104.1 998,104.1 996,104.1 996,104.9 994,104.9 994,103.5 992,103.5 992,104.9 990,104.9 990,104.9 988,104.9 988,104.9 986,104.9 986,104.9 984,104.9 984,104.9 982,104.9 982,103.5 980,103.5 980,104.9 978,104.9 978,103.9 976,103.9 976,104.9 974,104.9 974,104.9 972,104.9 972,104.9 970,104.9 970,104.9 968,104.9 968,104.9 966,104.9 966,104.4 964,104.4 964,104.9 962,104.9 962,103.5 960,103.5 960,104.1 958,104.1 958,104.9 956,104.9 956,104.1 954,104.1 954,103.9 952,103.9 952,104.9 950,104.9 950,103.9 948,103.9 948,104.9 946,104.9 946,103.9 944,103.9 944,104.4 942,104.4 942,104.9 940,104.9 940,104.1 938,104.1 938,104.4 936,104.4 936,104.9 934,104.9 934,104.9 932,104.9 932,104.4 930,104.4 930,103.5 928,103.5 928,103.5 926,103.5 926,104.1 924,104.1 924,103.9 922,103.9 922,103.9 920,103.9 920,103.9 918,103.9 918,103.9 916,103.9 916,104.9 914,104.9 914,104.9 912,104.9 912,104.9 910,104.9 910,104.9 908,104.9 908,103.9 906,103.9 906,104.9 904,104.9 904,104.9 902,104.9 902,103.5 900,103.5 900,104.1 898,104.1 898,104.4 896,104.4 896,104.1 894,104.1 894,104.9 892,104.9 892,104.9 890,104.9 890,104.9 888,104.9 888,104.9 886,104.9 886,104.1 884,104.1 884,104.1 882,104.1 882,104.1 880,104.1 880,104.9 878,104.9 878,103.9 876,103.9 876,104.9 874,104.9 874,104.1 872,104.1 872,104.4 870,104.4 870,104.1 868,104.1 868,104.9 866,104.9 866,104.9 864,104.9 864,104.4 862,104.4 862,104.9 860,104.9 860,104.9 858,104.9 858,104.9 856,104.9 856,104.9 854,104.9 854,104.1 852,104.1 852,104.4 850,104.4 850,104.9 848,104.9 848,104.1 846,104.1 846,104.1 844,104.1 844,104.1 842,104.1 842,104.9 840,104.9 840,104.9 838,104.9 838,104.4 836,104.4 836,103.5 834,103.5 834,103.9 832,103.9 832,103.5 830,103.5 830,104.9 828,104.9 828,104.9 826,104.9 826,103.5 824,103.5 824,103.5 822,103.5 822,104.1 820,104.1 820,103.9 818,103.9 818,103.5 816,103.5 816,103.5 814,103.5 814,103.9 812,103.9 812,104.9 810,104.9 810,104.9 808,104.9 808,103.5 806,103.5 806,103.9 804,103.9 804,104.1 802,104.1 802,103.5 800,103.5 800,104.4 798,104.4 798,104.9 796,104.9 796,104.9 794,104.9 794,103.5 792,103.5 792,104.9 790,104.9 790,104.9 788,104.9 788,103.9 786,103.9 786,103.5 784,103.5 784,103.9 782,103.9 782,104.5 780,104.5 780,104.9 778,104.9 778,104.9 776,104.9 776,104.9 774,104.9 774,104.9 772,104.9 772,104.9 770,104.9 770,104.9 768,104.9 768,104.9 766,104.9 766,104.9 764,104.9 764,104.9 762,104.9 762,104.9 760,104.9 760,104.9 758,104.9 758,104.9 756,104.9 756,104.9 754,104.9 754,104.9 752,104.9 752,104.9 750,104.9 750,104.9 748,104.9 748,104.9 746,104.9 746,104.9 744,104.9 744,104.9 742,104.9 742,104.9 740,104.9 740,104.9 738,104.9 738,104.9 736,104.9 736,104.9 734,104.9 734,104.9 732,104.9 732,104.9 730,104.9 730,104.5 728,104.5 728,104.9 726,104.9 726,104.9 724,104.9 724,104.9 722,104.9 722,104.9 720,104.9 720,104.9 718,104.9 718,104.9 716,104.9 716,104.9 714,104.9 714,104.9 712,104.9 712,104.9 710,104.9 710,104.9 708,104.9 708,104.9 706,104.9 706,104.9 704,104.9 704,104.9 702,104.9 702,104.9 700,104.9 700,104.9 698,104.9 698,104.9 696,104.9 696,104.9 694,104.9 694,104.9 692,104.9 692,104.9 690,104.9 690,104.9 688,104.9 688,104.9 686,104.9 686,104.9 684,104.9 684,104.9 682,104.9 682,104.9 680,104.9 680,104.9 678,104.9 678,104.9 676,104.9 676,104.9 674,104.9 674,104.9 672,104.9 672,104.9 670,104.9 670,104.9 668,104.9 668,104.9 666,104.9 666,104.9 664,104.9 664,104.9 662,104.9 662,104.9 660,104.9 660,104.9 658,104.9 658,104.9 656,104.9 656,104.9 654,104.9 654,104.9 652,104.9 652,104.9 650,104.9 650,104.9 648,104.9 648,104.9 646,104.9 646,104.9 644,104.9 644,104.9 642,104.9 642,104.9 640,104.9 640,104.9 638,104.9 638,104.9 636,104.9 636,104.9 634,104.9 634,104.9 632,104.9 632,104.9 630,104.9 630,104.9 628,104.9 628,104.9 626,104.9 626,104.9 624,104.9 624,104.9 622,104.9 622,104.9 620,104.9 620,104.9 618,104.9 618,104.9 616,104.9 616,104.9 614,104.9 614,104.9 612,104.9 612,104.9 610,104.9 610,104.9 608,104.9 608,104.9 606,104.9 606,104.9 604,104.9 604,104.9 602,104.9 602,104.9 600,104.9 600,104.9 598,104.9 598,104.9 596,104.9 596,104.9 594,104.9 594,104.9 592,104.9 592,104.9 590,104.9 590,104.9 588,104.9 588,104.9 586,104.9 586,104.9 584,104.9 584,104.9 582,104.9 582,104.9 580,104.9 580,104.5 578,104.5 578,104.9 576,104.9 576,104.9 574,104.9 574,104.9 572,104.9 572,104.9 570,104.9 570,104.9 568,104.9 568,104.9 566,104.9 566,104.9 564,104.9 564,104.9 562,104.9 562,104.9 560,104.9 560,104.9 558,104.9 558,104.9 556,104.9 556,104.9 554,104.9 554,104.9 552,104.9 552,104.9 550,104.9 550,104.9 548,104.9 548,104.9 546,104.9 546,104.9 544,104.9 544,104.9 542,104.9 542,103.5 540,103.5 540,104.9 538,104.9 538,104.9 536,104.9 536,104.9 534,104.9 534,104.9 532,104.9 532,104.9 530,104.9 530,104.9 528,104.9 528,104.9 526,104.9 526,104.9 524,104.9 524,104.1 522,104.1 522,104.1 520,104.1 520,104.1 518,104.1 518,104.1 516,104.1 516,103.5 514,103.5 514,104.4 512,104.4 512,103.9 510,103.9 510,104.1 508,104.1 508,104.4 506,104.4 506,104.4 504,104.4 504,103.5 502,103.5 502,104.4 500,104.4 500,104.9 498,104.9 498,103.5 496,103.5 496,103.5 494,103.5 494,104.9 492,104.9 492,104.9 490,104.9 490,104.9 488,104.9 488,103.9 486,103.9 486,104.9 484,104.9 484,104.4 482,104.4 482,104.9 480,104.9 480,104.9 478,104.9 478,104.9 476,104.9 476,104.4 474,104.4 474,104.1 472,104.1 472,104.9 470,104.9 470,103.9 468,103.9 468,103.9 466,103.9 466,104.9 464,104.9 464,104.1 462,104.1 462,104.9 460,104.9 460,104.1 458,104.1 458,104.1 456,104.1 456,104.9 454,104.9 454,104.9 452,104.9 452,103.9 450,103.9 450,104.9 448,104.9 448,104.9 446,104.9 446,104.9 444,104.9 444,104.1 442,104.1 442,104.9 440,104.9 440,104.1 438,104.1 438,104.9 436,104.9 436,103.9 434,103.9 434,103.5 432,103.5 432,104.9 430,104.9 430,104.4 428,104.4 428,104.9 426,104.9 426,104.4 424,104.4 424,104.9 422,104.9 422,103.9 420,103.9 420,104.1 418,104.1 418,103.5 416,103.5 416,103.5 414,103.5 414,104.4 412,104.4 412,103.7 410,103.7 410,103.7 408,103.7 408,103.7 406,103.7 406,103.7 404,103.7 404,102.0 402,102.0 402,102.0 400,102.0 400,102.0 398,102.0 398,102.0 396,102.0 396,102.2 394,102.2 394,102.4 392,102.4 392,102.7 390,102.7 390,103.0 388,103.0 388,103.5 386,103.5 386,104.5 384,104.5 384,104.1 382,104.1 382,104.9 380,104.9 380,104.9 378,104.9 378,103.5 376,103.5 376,104.9 374,104.9 374,104.9 372,104.9 372,104.4 370,104.4 370,104.1 368,104.1 368,104.9 366,104.9 366,104.9 364,104.9 364,103.9 362,103.9 362,104.9 360,104.9 360,104.9 358,104.9 358,104.9 356,104.9 356,103.5 354,103.5 354,104.9 352,104.9 352,104.1 350,104.1 350,104.4 348,104.4 348,104.9 346,104.9 346,104.9 344,104.9 344,104.9 342,104.9 342,103.5 340,103.5 340,104.9 338,104.9 338,104.4 336,104.4 336,103.5 334,103.5 334,104.9 332,104.9 332,103.9 330,103.9 330,104.9 328,104.9 328,104.9 326,104.9 326,104.9 324,104.9 324,104.9 322,104.9 322,103.9 320,103.9 320,104.9 318,104.9 318,104.9 316,104.9 316,103.5 314,103.5 314,104.9 312,104.9 312,104.4 310,104.4 310,104.9 308,104.9 308,103.5 306,103.5 306,104.9 304,104.9 304,103.5 302,103.5 302,104.9 300,104.9 300,104.1 298,104.1 298,104.9 296,104.9 296,104.9 294,104.9 294,104.9 292,104.9 292,104.9 290,104.9 290,103.5 288,103.5 288,104.9 286,104.9 286,104.4 284,104.4 284,104.9 282,104.9 282,103.4 280,103.4 280,102.3 278,102.3 278,101.5 276,101.5Z" fill="#dcdcc4"/>
 <path d="M278,101.5 H1750" stroke="#a8ac50" stroke-width="1"/>
</svg>
<svg width="140" height="50" style="left:0;top:115px" viewBox="0 115 140 50">
 <g>
  <circle cx="14.6" cy="124.6" r="2.5" fill="#000"/><circle cx="13.9" cy="123.7" r="2.5" fill="#20e8f0"/>
  <path d="M18.6,124.7 L21.4,121.8 V123.7 H23.2 V125.7 H21.4 V127.6 Z" fill="#000"/>
  <path d="M17.8,123.8 L20.6,120.9 V122.8 H22.4 V124.8 H20.6 V126.7 Z" fill="#f8f020"/>
  <circle cx="62.9" cy="124.6" r="2.5" fill="#000"/><circle cx="62.2" cy="123.7" r="2.5" fill="#20e8f0"/>
  <path d="M59.2,124.7 L56.4,121.8 V123.7 H54.6 V125.7 H56.4 V127.6 Z" fill="#000"/>
  <path d="M58.4,123.8 L55.6,120.9 V122.8 H53.8 V124.8 H55.6 V126.7 Z" fill="#f8f020"/>
 </g>
 <circle cx="35.4" cy="141.8" r="4.8" fill="#222"/>
 <circle cx="34.7" cy="141" r="4.8" fill="#20e8f0"/>
 <path d="M35.5,147.3 L41.6,152.8 L40.2,154.4 L37,151.6 V158 H34 V151.6 L30.8,154.4 L29.4,152.8 Z" fill="#111"/>
 <path d="M34.7,146.4 L40.8,151.9 L39.4,153.5 L36.2,150.7 V157.1 H33.2 V150.7 L30,153.5 L28.6,151.9 Z" fill="#f8f020"/>
 <path d="M111.6,154.6 L127.7,138.5" stroke="#000" stroke-width="1"/>
 <rect x="125.2" y="136" width="5" height="5" fill="#38d038" stroke="#000" stroke-width="1"/>
 <rect x="117.2" y="144" width="5" height="5" fill="#38d038" stroke="#000" stroke-width="1"/>
 <rect x="109.1" y="152.1" width="5" height="5" fill="#38d038" stroke="#000" stroke-width="1"/>
</svg>
<div class="lcd" style="left:187px;top:134px"><span>00<i>:</i>00<i>:</i>00<i>:</i>00</span></div>
<div class="lcd" style="left:893px;top:134px"><span>00<i>:</i>00<i>:</i>01<i>:</i>22</span></div>
<div class="lcd" style="left:1599px;top:134px"><span>00<i>:</i>03<i>:</i>06<i>:</i>53</span></div>
<div class="a" style="left:75px;top:188px;width:1702px;height:237px;box-sizing:border-box;border:1px solid #000;background:linear-gradient(#303030 0%,#3a3a3a 25%,#474747 50%,#3a3a3a 75%,#303030 100%);"></div>
<div class="a focusdots" style="left:76px;top:186px;width:1700px;height:1px;background:repeating-linear-gradient(to right,rgba(175,175,175,.3) 0,rgba(175,175,175,.3) 1px,transparent 1px,transparent 2px)"></div>
<div class="a focusdots" style="left:76px;top:189px;width:1700px;height:1px;background:repeating-linear-gradient(to right,rgba(120,120,120,.35) 0,rgba(120,120,120,.35) 1px,transparent 1px,transparent 2px)"></div>
<svg width="1780" height="260" style="left:0;top:180px" viewBox="0 180 1780 260" shape-rendering="crispEdges">
 <defs>
  <linearGradient id="gNav" x1="0" y1="0" x2="1" y2="1"><stop offset="0" stop-color="#ffec9c"/><stop offset="0.6" stop-color="#f4c83c"/><stop offset="1" stop-color="#d8a018"/></linearGradient>
 </defs>
 <path d="M76,307V291h2V285h2V290h2V280h2V276h2V274h2V285h2V283h2V282h2V289h2V292h2V288h2V284h2V289h2V286h2V278h2V275h2V273h2V286h2V293h2V279h2V291h2V285h2V269h2V287h2V282h2V284h2V289h2V285h2V286h2V283h2V285h2V287h2V285h2V289h2V283h2V289h2V291h2V294h2V285h2V269h2V277h2V278h2V273h2V269h2V273h2V275h2V274h2V276h2V281h2V285h2V281h2V278h2V283h2V286h2V288h2V279h2V281h2V283h2V287h2V281h2V290h2V289h2V283h2V281h2V280h2V285h2V290h2V284h2V282h2V279h2V277h2V271h2V271h2V278h2V284h2V291h2V288h2V276h2V264h2V274h2V276h2V274h2V272h2V284h2V276h2V271h2V285h2V280h2V275h2V280h2V294h2V291h2V294h2V290h2V288h2V278h2V272h2V271h2V274h2V274h2V278h2V275h2V282h2V283h2V283h2V284h2V281h2V278h2V287h2V288h2V287h2V296h2V291h2V290h2V292h2V262h2V259h2V263h2V280h2V273h2V281h2V282h2V281h2V282h2V279h2V277h2V280h2V282h2V275h2V276h2V284h2V277h2V286h2V289h2V278h2V281h2V289h2V284h2V284h2V284h2V286h2V281h2V287h2V285h2V271h2V283h2V287h2V289h2V287h2V287h2V288h2V286h2V270h2V283h2V292h2V285h2V282h2V284h2V283h2V279h2V283h2V287h2V283h2V277h2V277h2V280h2V287h2V283h2V287h2V285h2V280h2V271h2V272h2V280h2V288h2V280h2V285h2V287h2V284h2V286h2V286h2V297h2V293h2V288h2V290h2V290h2V293h2V294h2V274h2V276h2V281h2V275h2V282h2V283h2V282h2V282h2V285h2V288h2V284h2V285h2V286h2V285h2V288h2V295h2V290h2V296h2V289h2V291h2V289h2V294h2V289h2V289h2V288h2V294h2V299h2V300h2V286h2V277h2V280h2V282h2V286h2V288h2V293h2V292h2V288h2V284h2V280h2V275h2V283h2V285h2V284h2V289h2V290h2V289h2V291h2V274h2V277h2V287h2V288h2V291h2V289h2V290h2V291h2V289h2V287h2V272h2V283h2V288h2V282h2V287h2V284h2V282h2V280h2V289h2V285h2V287h2V287h2V288h2V291h2V287h2V285h2V285h2V284h2V267h2V270h2V270h2V279h2V277h2V284h2V281h2V280h2V283h2V282h2V278h2V282h2V284h2V282h2V284h2V279h2V283h2V284h2V285h2V278h2V286h2V289h2V287h2V283h2V280h2V287h2V289h2V288h2V278h2V278h2V282h2V282h2V282h2V282h2V287h2V282h2V284h2V284h2V286h2V270h2V280h2V277h2V280h2V289h2V286h2V285h2V282h2V277h2V270h2V265h2V277h2V279h2V282h2V283h2V285h2V284h2V280h2V276h2V272h2V273h2V279h2V279h2V273h2V277h2V281h2V277h2V290h2V283h2V281h2V279h2V282h2V278h2V285h2V288h2V267h2V271h2V267h2V274h2V276h2V277h2V280h2V265h2V271h2V279h2V278h2V279h2V277h2V281h2V281h2V274h2V281h2V276h2V287h2V277h2V282h2V278h2V280h2V278h2V283h2V280h2V283h2V288h2V282h2V279h2V274h2V274h2V273h2V273h2V274h2V259h2V280h2V285h2V287h2V278h2V280h2V273h2V269h2V268h2V274h2V286h2V286h2V279h2V273h2V279h2V278h2V280h2V279h2V282h2V281h2V285h2V288h2V281h2V269h2V274h2V279h2V275h2V278h2V289h2V277h2V281h2V277h2V285h2V290h2V294h2V287h2V290h2V290h2V292h2V284h2V279h2V280h2V281h2V291h2V294h2V282h2V287h2V287h2V282h2V289h2V282h2V288h2V294h2V282h2V286h2V286h2V280h2V277h2V276h2V279h2V286h2V283h2V285h2V289h2V288h2V286h2V278h2V285h2V287h2V289h2V274h2V278h2V291h2V281h2V282h2V281h2V269h2V286h2V285h2V287h2V284h2V286h2V283h2V282h2V281h2V283h2V284h2V288h2V292h2V288h2V288h2V291h2V286h2V269h2V267h2V277h2V264h2V267h2V269h2V273h2V280h2V278h2V279h2V285h2V277h2V282h2V283h2V286h2V284h2V285h2V283h2V284h2V282h2V282h2V286h2V291h2V283h2V286h2V289h2V282h2V282h2V290h2V286h2V281h2V281h2V273h2V275h2V277h2V273h2V281h2V286h2V270h2V264h2V272h2V275h2V279h2V278h2V270h2V283h2V272h2V285h2V287h2V287h2V274h2V286h2V283h2V292h2V291h2V287h2V279h2V278h2V272h2V277h2V270h2V272h2V274h2V285h2V280h2V282h2V288h2V284h2V277h2V285h2V291h2V286h2V290h2V289h2V288h2V286h2V260h2V263h2V263h2V264h2V277h2V280h2V280h2V287h2V281h2V280h2V278h2V277h2V276h2V278h2V272h2V274h2V283h2V276h2V287h2V280h2V278h2V283h2V286h2V281h2V280h2V282h2V282h2V279h2V283h2V270h2V283h2V285h2V293h2V285h2V283h2V285h2V287h2V277h2V276h2V286h2V283h2V281h2V281h2V279h2V280h2V279h2V284h2V284h2V282h2V275h2V278h2V281h2V283h2V284h2V285h2V277h2V272h2V272h2V270h2V287h2V281h2V283h2V287h2V285h2V282h2V284h2V288h2V289h2V289h2V292h2V295h2V296h2V295h2V287h2V274h2V277h2V286h2V273h2V280h2V281h2V280h2V280h2V285h2V290h2V283h2V289h2V287h2V286h2V288h2V291h2V288h2V293h2V293h2V287h2V285h2V288h2V288h2V287h2V288h2V287h2V294h2V283h2V277h2V278h2V282h2V283h2V285h2V287h2V293h2V289h2V284h2V281h2V281h2V277h2V288h2V284h2V296h2V289h2V290h2V296h2V288h2V288h2V277h2V288h2V287h2V288h2V289h2V288h2V286h2V292h2V288h2V269h2V283h2V285h2V285h2V283h2V282h2V279h2V282h2V287h2V284h2V285h2V288h2V293h2V286h2V291h2V284h2V283h2V268h2V268h2V269h2V271h2V279h2V282h2V285h2V281h2V280h2V283h2V278h2V283h2V285h2V282h2V281h2V282h2V287h2V288h2V285h2V284h2V281h2V290h2V283h2V279h2V292h2V284h2V285h2V283h2V288h2V278h2V281h2V280h2V284h2V279h2V282h2V281h2V283h2V285h2V289h2V271h2V285h2V280h2V279h2V278h2V284h2V283h2V284h2V283h2V274h2V263h2V266h2V270h2V271h2V281h2V284h2V281h2V278h2V274h2V273h2V273h2V278h2V279h2V277h2V268h2V276h2V277h2V284h2V282h2V279h2V284h2V275h2V277h2V282h2V290h2V273h2V267h2V274h2V266h2V280h2V277h2V274h2V265h2V268h2V276h2V274h2V274h2V273h2V280h2V281h2V274h2V280h2V275h2V284h2V274h2V277h2V286h2V278h2V279h2V283h2V287h2V281h2V288h2V286h2V282h2V281h2V272h2V272h2V271h2V274h2V258h2V276h2V281h2V291h2V287h2V278h2V272h2V271h2V272h2V270h2V286h2V282h2V280h2V279h2V269h2V278h2V276h2V280h2V282h2V280h2V282h2V287h2V283h2V269h2V279h2V281h2V278h2V277h2V278h2V281h2V272h2V275h2V277h2V285h2V289h2V290h2V289h2V289h2V288h2V288h2V287h2V247h2V253h2V273h2V268h2V274h2V276h2V275h2V279h2V277h2V279h2V307ZM76,307V335h2V332h2V336h2V336h2V338h2V339h2V342h2V332h2V333h2V338h2V341h2V344h2V329h2V336h2V336h2V346h2V331h2V333h2V326h2V333h2V336h2V330h2V335h2V351h2V337h2V335h2V327h2V341h2V337h2V328h2V333h2V326h2V333h2V330h2V330h2V330h2V337h2V331h2V326h2V332h2V331h2V345h2V336h2V330h2V342h2V342h2V347h2V348h2V350h2V336h2V333h2V325h2V334h2V342h2V338h2V342h2V336h2V335h2V332h2V333h2V330h2V328h2V327h2V327h2V328h2V330h2V331h2V330h2V326h2V334h2V340h2V332h2V334h2V329h2V331h2V330h2V328h2V336h2V336h2V339h2V349h2V344h2V340h2V339h2V345h2V341h2V334h2V338h2V338h2V341h2V336h2V337h2V338h2V344h2V338h2V332h2V333h2V333h2V335h2V343h2V333h2V330h2V330h2V329h2V329h2V329h2V329h2V323h2V321h2V326h2V322h2V324h2V324h2V326h2V322h2V338h2V337h2V336h2V350h2V333h2V334h2V338h2V337h2V334h2V337h2V329h2V344h2V333h2V333h2V334h2V333h2V334h2V330h2V328h2V329h2V326h2V328h2V321h2V326h2V329h2V324h2V326h2V323h2V325h2V330h2V335h2V329h2V329h2V340h2V332h2V330h2V329h2V327h2V330h2V336h2V335h2V333h2V331h2V331h2V333h2V335h2V335h2V335h2V334h2V347h2V336h2V335h2V339h2V338h2V333h2V335h2V336h2V342h2V339h2V334h2V327h2V334h2V329h2V330h2V326h2V327h2V323h2V327h2V325h2V327h2V326h2V320h2V324h2V322h2V321h2V331h2V327h2V336h2V335h2V331h2V325h2V328h2V322h2V326h2V325h2V319h2V325h2V329h2V330h2V327h2V320h2V319h2V323h2V324h2V321h2V322h2V326h2V331h2V326h2V325h2V325h2V325h2V322h2V326h2V321h2V325h2V327h2V327h2V322h2V322h2V324h2V328h2V327h2V345h2V337h2V335h2V333h2V331h2V330h2V338h2V333h2V332h2V339h2V345h2V335h2V335h2V333h2V328h2V333h2V335h2V343h2V348h2V351h2V340h2V340h2V339h2V336h2V330h2V339h2V332h2V333h2V333h2V322h2V330h2V328h2V325h2V321h2V318h2V329h2V325h2V337h2V333h2V334h2V333h2V331h2V331h2V325h2V331h2V322h2V322h2V341h2V337h2V335h2V332h2V324h2V329h2V330h2V327h2V329h2V332h2V330h2V337h2V333h2V329h2V331h2V324h2V324h2V321h2V331h2V332h2V333h2V335h2V343h2V337h2V331h2V338h2V335h2V338h2V334h2V334h2V331h2V327h2V328h2V331h2V333h2V345h2V347h2V337h2V344h2V343h2V341h2V339h2V337h2V339h2V337h2V339h2V337h2V337h2V336h2V334h2V328h2V328h2V334h2V339h2V343h2V334h2V331h2V341h2V347h2V337h2V330h2V326h2V330h2V325h2V333h2V331h2V331h2V335h2V344h2V349h2V343h2V332h2V331h2V334h2V344h2V338h2V345h2V335h2V324h2V324h2V327h2V329h2V331h2V328h2V327h2V323h2V327h2V331h2V333h2V337h2V338h2V337h2V333h2V329h2V329h2V335h2V341h2V341h2V343h2V334h2V341h2V334h2V345h2V349h2V344h2V342h2V340h2V341h2V346h2V343h2V339h2V339h2V332h2V341h2V333h2V333h2V334h2V336h2V332h2V337h2V336h2V337h2V341h2V339h2V325h2V332h2V331h2V329h2V325h2V323h2V326h2V329h2V331h2V328h2V326h2V318h2V322h2V317h2V331h2V330h2V327h2V323h2V325h2V329h2V331h2V336h2V339h2V338h2V325h2V333h2V335h2V330h2V332h2V336h2V332h2V334h2V337h2V344h2V333h2V333h2V338h2V338h2V344h2V331h2V329h2V337h2V345h2V336h2V332h2V331h2V329h2V328h2V340h2V335h2V350h2V331h2V333h2V335h2V336h2V336h2V335h2V334h2V328h2V326h2V325h2V330h2V325h2V336h2V326h2V331h2V325h2V330h2V332h2V341h2V330h2V333h2V342h2V342h2V345h2V346h2V338h2V329h2V328h2V340h2V339h2V342h2V341h2V333h2V332h2V334h2V329h2V331h2V329h2V328h2V322h2V327h2V329h2V330h2V330h2V327h2V328h2V331h2V334h2V333h2V328h2V333h2V325h2V327h2V336h2V341h2V342h2V347h2V346h2V342h2V340h2V343h2V338h2V337h2V338h2V335h2V337h2V338h2V342h2V333h2V347h2V339h2V333h2V330h2V337h2V333h2V342h2V335h2V332h2V327h2V328h2V325h2V325h2V328h2V323h2V322h2V326h2V321h2V324h2V323h2V321h2V321h2V322h2V337h2V339h2V349h2V331h2V329h2V337h2V334h2V333h2V330h2V333h2V344h2V341h2V332h2V335h2V335h2V327h2V330h2V325h2V326h2V331h2V328h2V326h2V327h2V324h2V321h2V323h2V324h2V323h2V330h2V331h2V335h2V335h2V332h2V332h2V330h2V325h2V326h2V326h2V327h2V335h2V331h2V331h2V338h2V330h2V334h2V336h2V329h2V339h2V343h2V346h2V337h2V336h2V338h2V339h2V341h2V332h2V334h2V336h2V332h2V335h2V330h2V330h2V330h2V329h2V328h2V326h2V323h2V326h2V325h2V325h2V324h2V321h2V323h2V319h2V327h2V327h2V332h2V334h2V332h2V330h2V327h2V327h2V320h2V323h2V326h2V320h2V323h2V329h2V319h2V330h2V325h2V327h2V318h2V323h2V326h2V324h2V328h2V325h2V331h2V327h2V325h2V325h2V324h2V325h2V326h2V328h2V325h2V319h2V322h2V315h2V331h2V326h2V343h2V337h2V342h2V333h2V329h2V328h2V332h2V334h2V332h2V335h2V343h2V335h2V337h2V340h2V333h2V336h2V329h2V334h2V341h2V350h2V339h2V337h2V335h2V339h2V335h2V338h2V337h2V333h2V330h2V330h2V321h2V326h2V326h2V322h2V317h2V326h2V327h2V329h2V339h2V334h2V333h2V334h2V326h2V330h2V326h2V324h2V320h2V331h2V341h2V337h2V333h2V327h2V330h2V324h2V327h2V331h2V330h2V328h2V335h2V333h2V329h2V331h2V325h2V325h2V319h2V328h2V330h2V334h2V334h2V336h2V336h2V336h2V336h2V332h2V336h2V336h2V335h2V330h2V325h2V325h2V325h2V329h2V332h2V345h2V347h2V340h2V340h2V337h2V339h2V338h2V338h2V337h2V337h2V331h2V338h2V334h2V336h2V334h2V325h2V330h2V332h2V334h2V342h2V340h2V331h2V339h2V335h2V331h2V326h2V327h2V329h2V332h2V331h2V329h2V329h2V333h2V348h2V344h2V342h2V329h2V337h2V343h2V336h2V341h2V343h2V330h2V325h2V325h2V329h2V331h2V329h2V325h2V327h2V325h2V326h2V328h2V335h2V337h2V336h2V332h2V332h2V329h2V327h2V334h2V341h2V343h2V333h2V332h2V335h2V338h2V340h2V343h2V341h2V340h2V339h2V346h2V341h2V336h2V346h2V331h2V333h2V333h2V333h2V332h2V331h2V333h2V338h2V335h2V334h2V332h2V339h2V333h2V329h2V327h2V320h2V321h2V327h2V326h2V326h2V324h2V328h2V334h2V323h2V322h2V324h2V320h2V345h2V336h2V338h2V347h2V338h2V337h2V336h2V335h2V339h2V330h2V307Z" fill="#f0be30"/>
 <rect x="76" y="307" width="826" height="1" fill="#8a6c10"/>
 <rect x="902" y="306" width="874" height="1" fill="#8a6c10"/>
 <rect x="926" y="189" width="1" height="235" fill="#8a7a10"/>
 <path d="M72,188h3v1h-3zM72,217h3v1h-3zM72,247h3v1h-3zM72,276h3v1h-3zM72,306h3v1h-3zM72,335h3v1h-3zM72,365h3v1h-3zM72,394h3v1h-3zM72,424h3v1h-3z" fill="#000"/>
 <path d="M358.5,425v2.5M642,425v2.5M925.5,425v2.5M1209,425v2.5M1492.5,425v2.5" stroke="#222" stroke-width="1"/>
 <g shape-rendering="auto" stroke="#000" stroke-width="1.1" stroke-linejoin="miter" fill="url(#gNav)">
  <path d="M38.4,283.4 L45.6,297.4 H31.2 Z"/>
  <path d="M38.4,330.4 L45.6,316.2 H31.2 Z"/>
  <path d="M16.4,307.3 L30.6,300.2 V314.4 Z"/>
  <path d="M60.4,307.3 L46.2,300.2 V314.4 Z"/>
  <rect x="30.8" y="298" width="15.2" height="17.8" fill="#6c6c6c" stroke="#1a1a1a" stroke-width="1"/>
 </g>
</svg>
<svg width="1000" height="80" style="left:0;top:445px" viewBox="0 445 1000 80">
 <defs>
  <linearGradient id="gW" x1="0" y1="0" x2="1" y2="1"><stop offset="0" stop-color="#ffffff"/><stop offset="0.5" stop-color="#f0f0f0"/><stop offset="1" stop-color="#9a9a9a"/></linearGradient>
  <linearGradient id="gStop" x1="0" y1="0" x2="1" y2="1"><stop offset="0" stop-color="#ffe070"/><stop offset="0.5" stop-color="#fbb030"/><stop offset="1" stop-color="#f07810"/></linearGradient>
  <radialGradient id="gRec2" cx="0.38" cy="0.32" r="0.75"><stop offset="0" stop-color="#ffb0b0"/><stop offset="0.55" stop-color="#f55858"/><stop offset="1" stop-color="#d82828"/></radialGradient>
  <linearGradient id="gThumb" x1="0" y1="0" x2="0" y2="1"><stop offset="0" stop-color="#ffe030"/><stop offset="0.5" stop-color="#e8b010"/><stop offset="1" stop-color="#9a6c00"/></linearGradient>
  <linearGradient id="gSpeed" x1="0" y1="0" x2="0" y2="1"><stop offset="0" stop-color="#6e6e6e"/><stop offset="0.3" stop-color="#505050"/><stop offset="0.6" stop-color="#262626"/><stop offset="0.85" stop-color="#0a0a0a"/><stop offset="1" stop-color="#000"/></linearGradient>
 <linearGradient id="gSpeedH" x1="0" y1="0" x2="1" y2="0"><stop offset="0" stop-color="#000" stop-opacity="0.18"/><stop offset="1" stop-color="#000" stop-opacity="0"/></linearGradient>
 </defs>
 <!-- icon1: play to cyan -->
 <path d="M38,476 L45.6,482.6 L38,489.3 Z" fill="#000"/><path d="M37,475.2 L44.6,481.8 L37,488.4 Z" fill="url(#gW)"/>
 <rect x="47" y="474.6" width="4.2" height="16.4" fill="#000"/><rect x="46" y="473.7" width="4.2" height="16.4" fill="#28e8f0"/>
 <!-- icon2: yellow then play -->
 <rect x="79.4" y="474.6" width="4.4" height="16.4" fill="#000"/><rect x="78.5" y="473.7" width="4.4" height="16.4" fill="#f8f020"/>
 <path d="M84.3,475 L93.6,482.5 L85.3,489.8 L84.3,489.8Z" fill="#000"/><path d="M85.2,475.6 L92.8,482 L85.2,488.4 Z" fill="url(#gW)"/>
 <!-- icon3 -->
 <path d="M115.7,478.7 L120,482.5 L115.7,486.3Z" fill="#000"/><path d="M114.9,478 L119.2,481.8 L114.9,485.5 Z" fill="#fff"/>
 <rect x="120.8" y="474.6" width="3.2" height="15.8" fill="#000"/><rect x="119.9" y="473.7" width="3.2" height="15.8" fill="#28e8f0"/>
 <rect x="125.7" y="474.6" width="3.3" height="15.8" fill="#000"/><rect x="124.8" y="473.7" width="3.3" height="15.8" fill="#f8f020"/>
 <path d="M130.8,478.7 L135.4,482.5 L130.8,486.3Z" fill="#000"/><path d="M130,478 L134.6,481.8 L130,485.5 Z" fill="#fff"/>
 <!-- icon4 -->
 <rect x="156.4" y="474.6" width="4.4" height="16.2" fill="#000"/><rect x="155.5" y="473.7" width="4.4" height="16.2" fill="#28e8f0"/>
 <path d="M160.4,474.6 L169,482.3 L161.5,489.6 L160.4,489.6Z" fill="#000"/><path d="M161.5,476 L168,481.9 L161.5,487.8 Z" fill="url(#gW)"/>
 <rect x="170.9" y="474.6" width="4.4" height="16.2" fill="#000"/><rect x="170" y="473.7" width="4.4" height="16.2" fill="#f8f020"/>
 <!-- icon5 mark in -->
 <path d="M220.2,474.2 H224.4 V491.4" fill="none" stroke="#b8b8b8" stroke-width="0.9"/>
 <path d="M219.4,473.4 H223.4 V490.8" fill="none" stroke="#000" stroke-width="1"/>
 <path d="M224,479.4 L230.2,485 L224,490.7 Z" fill="#28e8f0" stroke="#0a5058" stroke-width="0.5"/>
 <!-- icon6 mark out -->
 <path d="M269,474.2 H265.2 V491.4" fill="none" stroke="#c8c8c8" stroke-width="0.9"/>
 <path d="M268,473.4 H264.2 V490.8" fill="none" stroke="#000" stroke-width="1"/>
 <path d="M263.6,479.4 L257.2,485 L263.6,490.4 Z" fill="#f8f020" stroke="#504800" stroke-width="0.5"/>
 <!-- small triangles -->
 <g stroke="#000" stroke-width="0.9">
  <path d="M219.6,508.4 V518.6 L213.4,513.5 Z" fill="#28e8f0"/>
  <path d="M234.2,508.4 V518.6 L240.6,513.5 Z" fill="#28e8f0"/>
  <path d="M259.6,508.4 V518.6 L253.5,513.5 Z" fill="#f8f020"/>
  <path d="M274.3,508.4 V518.6 L280.6,513.5 Z" fill="#f8f020"/>
 </g>
 <!-- scissors red -->
 <path d="M319.6,472.4 L326.6,483.6 M331,472.4 L324,483.6" stroke="#222" stroke-width="3.6" stroke-linecap="round"/>
 <path d="M319.6,472.4 L326.4,483.4 M331,472.4 L324.2,483.4" stroke="#fff" stroke-width="2.2" stroke-linecap="round"/>
 <circle cx="320.8" cy="487" r="3" fill="none" stroke="#3a1010" stroke-width="3.6"/><circle cx="329.6" cy="487" r="3" fill="none" stroke="#3a1010" stroke-width="3.6"/>
 <circle cx="320.8" cy="487" r="3" fill="#2a1a1a" stroke="#f05858" stroke-width="2.2"/><circle cx="329.6" cy="487" r="3" fill="#2a1a1a" stroke="#f05858" stroke-width="2.2"/>
 <path d="M323.4,483.6 L325.2,481.2 L327,483.6" fill="#f05858"/>
 <!-- scissors gold -->
 <path d="M363.6,471.6 L366.4,471.6 L367.8,474 V484 H362.2 V474 Z" fill="#222"/>
 <path d="M363.8,472.4 V484 M366.2,472.4 V484" stroke="#fff" stroke-width="1.6"/>
 <circle cx="360.4" cy="488.2" r="3" fill="none" stroke="#3a2a10" stroke-width="3.6"/><circle cx="369.4" cy="488.2" r="3" fill="none" stroke="#3a2a10" stroke-width="3.6"/>
 <circle cx="360.4" cy="488.2" r="3" fill="#2a2010" stroke="#e8a840" stroke-width="2.2"/><circle cx="369.4" cy="488.2" r="3" fill="#2a2010" stroke="#e8a840" stroke-width="2.2"/>
 <!-- copy -->
 <path d="M397.4,472.4 H403.4 L406.4,475.4 V484.4 H397.4 Z" fill="#fff" stroke="#000" stroke-width="0.9"/>
 <path d="M399,476.5h5M399,478.5h5M399,480.5h5" stroke="#a0a0d8" stroke-width="0.8"/>
 <path d="M402.6,478 H408.8 L412,481.2 V490 H402.6 Z" fill="#fff" stroke="#000" stroke-width="0.9"/>
 <path d="M404.4,482.6h5.6M404.4,484.6h5.6M404.4,486.6h5.6" stroke="#8080d0" stroke-width="0.8"/>
 <!-- paste -->
 <rect x="436.8" y="474.4" width="14.2" height="12.8" rx="1" fill="#dcf0b4" stroke="#000" stroke-width="0.9"/>
 <path d="M440,476.4 Q440,472 443.8,472 Q447.6,472 447.6,476.4 Z" fill="#f8e020" stroke="#504800" stroke-width="0.6"/>
 <path d="M443,480 H450 L453,483 V490 H443 Z" fill="#fff" stroke="#000" stroke-width="0.9"/>
 <path d="M444.8,484h6.2M444.8,486h6.2M444.8,488h6.2" stroke="#4aa0d8" stroke-width="0.6"/>
 <!-- speed box -->
 <rect x="487" y="450" width="180" height="49" fill="url(#gSpeed)"/><rect x="487" y="450" width="180" height="49" fill="url(#gSpeedH)"/>
 <g fill="#fff">
  <path d="M491.2,478h3v1h-3zM492.2,477h1v3h-1z"/>
  <path d="M533.4,478h3v1h-3zM534.4,477h1v3h-1z"/>
  <path d="M576,478h3v1h-3zM577,477h1v3h-1z"/>
  <path d="M618,478h3v1h-3zM619,477h1v3h-1z"/>
  <path d="M661,478h3v1h-3zM662,477h1v3h-1z"/>
 </g>
 <path d="M568,466 H587.6 L577.6,475.6 Z" fill="url(#gThumb)"/>
 <path d="M615.8,486 L619.4,482 L623.2,486 Z" fill="#f0d030"/>
 <!-- play -->
 <path d="M701.6,474.2 L711,482.6 L701.6,491.2 Z" fill="#111"/>
 <path d="M700.5,473.2 L709.8,481.6 L700.5,490 Z" fill="url(#gW)"/>
 <!-- stop -->
 <rect x="737" y="473" width="16.4" height="16.2" fill="#111"/>
 <rect x="736.2" y="472.2" width="16" height="15.8" fill="url(#gStop)"/>
 <!-- record -->
 <circle cx="784.6" cy="482" r="9.2" fill="url(#gRec2)" stroke="#701010" stroke-width="1"/>
 <!-- rewind -->
 <g>
  <path d="M826.6,474.2 V491.2 L817,482.7 Z M835.2,474.2 V491.2 L825.6,482.7 Z" fill="#111"/>
  <path d="M825.4,473.2 V490 L815.8,481.6 Z M834,473.2 V490 L824.4,481.6 Z" fill="url(#gW)"/>
 </g>
 <!-- ff -->
 <g>
  <path d="M856.6,474.2 V491.2 L866.2,482.7 Z M865.2,474.2 V491.2 L874.8,482.7 Z" fill="#111"/>
  <path d="M855.5,473.2 V490 L865.1,481.6 Z M864.1,473.2 V490 L873.7,481.6 Z" fill="url(#gW)"/>
 </g>
 <!-- skip start -->
 <g>
  <path d="M916,474.6 h2.6 v16.4 h-2.6z M927.6,474.2 V491.2 L918.6,482.7 Z M936.4,474.2 V491.2 L927.4,482.7 Z" fill="#222"/>
  <path d="M915,473.6 h2.4 v16 h-2.4z M926.4,473.2 V490 L917.6,481.6 Z M935.2,473.2 V490 L926.4,481.6 Z" fill="url(#gW)"/>
 </g>
 <!-- skip end -->
 <g>
  <path d="M973.4,474.6 h2.4 v16.4 h-2.4z M955.6,474.2 V491.2 L964.6,482.7 Z M964.4,474.2 V491.2 L973.4,482.7 Z" fill="#222"/>
  <path d="M972.3,473.6 h2.4 v16 h-2.4z M954.5,473.2 V490 L963.3,481.6 Z M963.3,473.2 V490 L972.1,481.6 Z" fill="url(#gW)"/>
 </g>
</svg>
<svg width="100" height="250" style="left:1806px;top:50px" viewBox="1806 50 100 250">
 <defs>
  <pattern id="pRed" x="0" y="59" width="20" height="3" patternUnits="userSpaceOnUse"><rect width="20" height="3" fill="#74060a"/><rect width="20" height="1.6" fill="#c4000c"/></pattern>
  <pattern id="pGrey" x="0" y="59" width="20" height="3" patternUnits="userSpaceOnUse"><rect width="20" height="3" fill="#303030"/><rect y="0" width="20" height="1.8" fill="#6a6a6a"/></pattern>
  <linearGradient id="gLock" x1="0" y1="0" x2="0" y2="1"><stop offset="0" stop-color="#f0cc50"/><stop offset="0.5" stop-color="#e0b030"/><stop offset="1" stop-color="#c89820"/></linearGradient>
 </defs>
 <g>
  <rect x="1814" y="57" width="24" height="126" fill="#f2f2f2"/>
  <rect x="1814" y="57" width="22.6" height="124.4" fill="#c4c4c4"/>
  <rect x="1815.2" y="58.2" width="21.2" height="123" fill="#2a2222"/>
  <rect x="1816.6" y="59" width="18.6" height="28" fill="url(#pRed)"/>
  <rect x="1816.6" y="89" width="18.6" height="87" fill="url(#pGrey)"/>
  <rect x="1816.6" y="176" width="18.6" height="4.4" fill="#c4000c"/>
 </g>
 <g transform="translate(57.4,0)">
  <rect x="1814" y="57" width="24" height="126" fill="#f2f2f2"/>
  <rect x="1814" y="57" width="22.6" height="124.4" fill="#c4c4c4"/>
  <rect x="1815.2" y="58.2" width="21.2" height="123" fill="#2a2222"/>
  <rect x="1816.6" y="59" width="18.6" height="28" fill="url(#pRed)"/>
  <rect x="1816.6" y="89" width="18.6" height="87" fill="url(#pGrey)"/>
  <rect x="1816.6" y="176" width="18.6" height="4.4" fill="#c4000c"/>
 </g>
 <g fill="#fff">
  <rect x="1839.4" y="60.8" width="2.8" height="1"/><rect x="1867" y="60.8" width="2.8" height="1"/>
  <rect x="1839.4" y="87.8" width="2.8" height="1"/><rect x="1867" y="87.8" width="2.8" height="1"/>
  <rect x="1839.4" y="177.2" width="2.8" height="1"/><rect x="1867" y="177.2" width="2.8" height="1"/>
 </g>
 <!-- faders -->
 <g>
  <path d="M1819,203.6h14.4M1819,212.6h14.4M1819,231.2h14.4M1819,240.4h14.4M1819,249.6h14.4M1819,259.2h14.4M1819,268.4h14.4M1819,277.4h14.4M1819,287.2h14.4" stroke="#3a3a3a" stroke-width="0.9"/>
  <rect x="1825.2" y="197.4" width="3" height="93" fill="#2a2a2a"/>
  <rect x="1826" y="197.4" width="1.4" height="93" fill="#e8e8e8"/>
  <rect x="1816.2" y="215.2" width="19.6" height="12.2" rx="6.1" fill="#000"/>
  <rect x="1820.2" y="219.8" width="12.2" height="3.4" rx="1.7" fill="#f8c030"/>
 </g>
 <g transform="translate(57.2,0)">
  <path d="M1819,203.6h14.4M1819,212.6h14.4M1819,231.2h14.4M1819,240.4h14.4M1819,249.6h14.4M1819,259.2h14.4M1819,268.4h14.4M1819,277.4h14.4M1819,287.2h14.4" stroke="#3a3a3a" stroke-width="0.9"/>
  <rect x="1825.2" y="197.4" width="3" height="93" fill="#2a2a2a"/>
  <rect x="1826" y="197.4" width="1.4" height="93" fill="#e8e8e8"/>
  <rect x="1816.2" y="215.2" width="19.6" height="12.2" rx="6.1" fill="#000"/>
  <rect x="1820.2" y="219.8" width="12.2" height="3.4" rx="1.7" fill="#f8c030"/>
 </g>
 <!-- lock -->
 <path d="M1848.4,280 V275.6 A6,6 0 0 1 1860.4,275.6 V280" fill="none" stroke="#e4e4e4" stroke-width="2.4"/>
 <path d="M1848.4,280 V275.6 A6,6 0 0 1 1860.4,275.6 V280" fill="none" stroke="#9a9a9a" stroke-width="0.6"/>
 <rect x="1844.2" y="278.8" width="20.6" height="13" rx="1.6" fill="url(#gLock)" stroke="#8a6c18" stroke-width="0.7"/>
</svg>
<div class="lcd" style="left:1780px;top:330px;height:34px"><span style="line-height:32.6px">00<i>:</i>00<i>:</i>01<i>:</i>22</span></div>
<div class="a" style="left:12px;top:534px;width:1883px;height:284px;box-sizing:border-box;background:#303030;border-top:2px solid #9c9c9c;border-left:2px solid #9c9c9c;border-bottom:2px solid #fafafa;border-right:1px solid #fafafa;"></div>
<div class="a" style="left:1876px;top:536px;width:19px;height:280px;background:linear-gradient(to right,#fff 0,#fff 1.2px,#e6e6e6 2px,#eeeeee 9px,#ececec 16px,#fff 17px,#fff 19px);"></div>
<svg width="18" height="280" style="left:1876px;top:536px" viewBox="0 0 18 280">
 <path d="M6.2,10.8 L9.4,7.2 L12.6,10.8 Z" fill="#5c5c5c"/>
 <path d="M6.2,270 L9.4,273.6 L12.6,270 Z" fill="#5c5c5c"/>
</svg>
<div id="txt">
<div class="t tab" style="left:36.5px">Production</div>
<div class="t tab" style="left:136.3px">Export</div>
<div class="t tab" style="left:216.6px">Import</div>
<div class="t tab" style="left:294.3px">Record</div>
<div class="t tab" style="left:378.6px">AirRun</div>
<div class="t tab" style="left:460.5px;top:9px;color:#fff">Snippet</div>
<div class="t tab" style="left:545.5px">Snippet+</div>
<div class="t tab" style="left:636.3px">Grid Editor</div>
<div class="t tab" style="left:735.5px">Federall</div>
<div class="t" style="left:50.6px;top:43px;font-weight:bold;font-size:11.5px;color:#f4c430;">?</div>
<div class="t ls" style="left:219.6px;top:45.6px;color:#fff">Recent Items :</div>
<div class="t ls" style="left:308.6px;top:46px;color:#111">Imagine Dragons</div>
<div class="t ls2" style="left:681.4px;top:46.4px;color:#111">Radioactive</div>
<div class="t ds" style="left:1702.3px;top:44.7px;color:#111">00:03:06:53</div>
<div class="t ds" style="left:12.5px;top:74.7px">00:00:00:00</div>
<div class="t ds" style="left:278.5px;top:74.7px">00:00:31:09</div>
<div class="t ds" style="left:573.5px;top:74.7px">00:01:02:18</div>
<div class="t ds" style="left:868.5px;top:74.7px">00:01:33:26</div>
<div class="t ds" style="left:1163.5px;top:74.7px">00:02:04:35</div>
<div class="t ds" style="left:1458.5px;top:74.7px">00:02:35:44</div>
<div class="t ds" style="left:1724.8px;top:74.7px">00:03:06:53</div>
<div class="t" style="left:187.2px;top:119.6px;letter-spacing:-0.12px">Selected Length :</div>
<div class="t ls2" style="left:893.4px;top:119.6px">Current :</div>
<div class="t ls2" style="left:1599.4px;top:119.6px">Edited Length :</div>
<div class="t ds ax" style="top:182px">33</div>
<div class="t ds ax" style="top:241px">16</div>
<div class="t ds ax" style="top:300px">0</div>
<div class="t ds ax" style="top:359px">-16</div>
<div class="t ds ax" style="top:418px">-33</div>
<div class="t ds" style="left:75px;top:428px">23:59:51:23</div>
<div class="t ds tl" style="left:307.7px;top:428px">23:59:54:56</div>
<div class="t ds tl" style="left:591.2px;top:428px">23:59:57:89</div>
<div class="t ds tl" style="left:874.7px;top:428px">00:00:01:22</div>
<div class="t ds tl" style="left:1158.2px;top:428px">00:00:04:56</div>
<div class="t ds tl" style="left:1441.7px;top:428px">00:00:07:89</div>
<div class="t ds" style="left:1677px;width:100px;text-align:right;top:428px">00:00:11:22</div>
<div class="t ls2" style="left:487.5px;top:449.7px">Speed : 0 %</div>
<div class="t ds" style="left:488.9px;top:484.5px">-200</div>
<div class="t ds" style="left:524px;top:484.5px">-100</div>
<div class="t ds" style="left:575.6px;top:484.5px">0</div>
<div class="t ds" style="left:611.5px;top:484.5px">100</div>
<div class="t ds" style="left:646.8px;top:484.5px">200</div>
<div class="t ds" style="left:1834px;width:40px;text-align:center;top:54.8px">+9</div>
<div class="t ds" style="left:1834px;width:40px;text-align:center;top:81.8px">0</div>
<div class="t ds" style="left:1834px;width:40px;text-align:center;top:171.2px">-30</div>
<div class="t ls2" style="left:1781px;top:314.5px">Before Blue</div>
</div>

</body></html>
